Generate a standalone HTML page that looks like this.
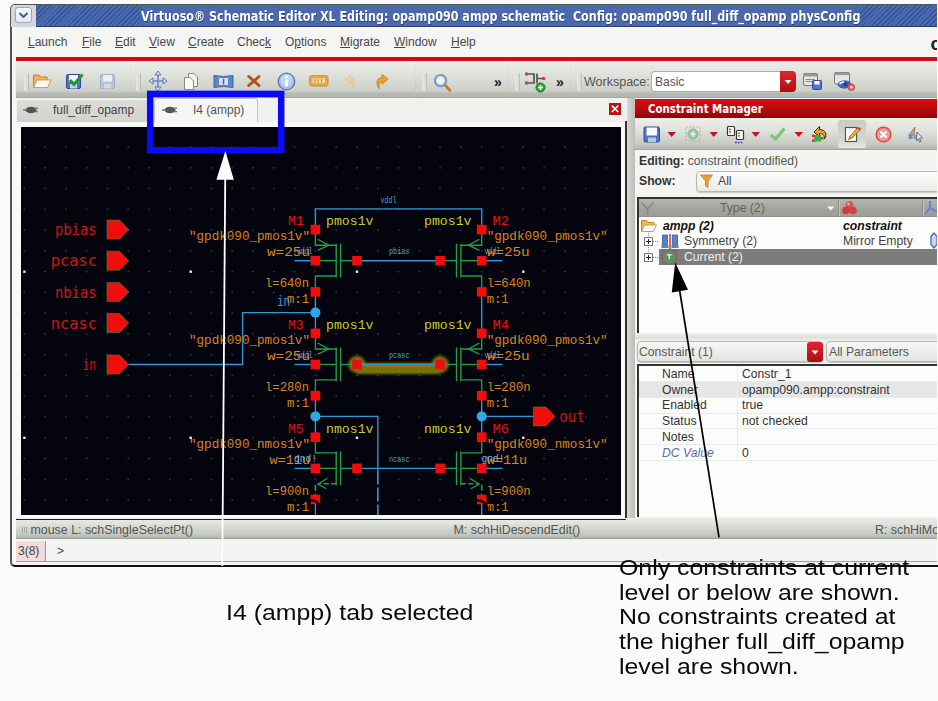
<!DOCTYPE html>
<html><head><meta charset="utf-8"><title>Virtuoso Schematic Editor XL</title>
<style>
html,body{margin:0;padding:0;}
body{width:938px;height:701px;overflow:hidden;background:#fbfbfb;font-family:"Liberation Sans",sans-serif;font-size:12px;color:#333;}
#root{position:relative;width:938px;height:701px;overflow:hidden;}
.abs{position:absolute;}
.t{position:absolute;white-space:nowrap;line-height:14px;}
.m{color:#484848;}
.st{color:#555;font-size:12.400px;}
.sch{font-family:"Liberation Mono","DejaVu Sans Mono",monospace;}
.pin{font-family:"DejaVu Sans Mono","Liberation Mono",monospace;}
.seg{position:absolute;top:63px;height:34px;border-radius:3px;background:linear-gradient(#ececea,#e2e4df 25%,#cdd0c9 82%,#b6bab2 90%,#b2b6ae);box-shadow:0 1px 1px #a8aca4;}
.ico{position:absolute;}
.row{position:absolute;left:638px;width:300px;height:16px;}
</style></head><body><div id="root">

<!-- window frame -->
<div class="abs" style="left:10px;top:4px;width:930px;height:563px;background:#f6f6f4;border:1px solid #555;border-bottom:2px solid #111;border-left:2px solid #555;border-radius:5px 0 0 5px;box-sizing:border-box;"></div>


<!-- title bar -->
<div class="abs" style="left:11px;top:5px;width:26px;height:22px;border-radius:4px 0 0 0;background:#d4d8de;"></div>
<div class="abs" style="left:36px;top:5px;width:902px;height:22px;background:#4b6ab0 repeating-linear-gradient(135deg,rgba(30,50,120,0.42) 0 1.2px,rgba(30,50,120,0) 1.2px 3.4px);border-bottom:1px solid #2c3c6c;box-sizing:border-box;"></div>
<div class="abs" style="left:138px;top:5px;width:724px;height:21px;background:linear-gradient(90deg,rgba(74,105,175,0),#4a69af 8px,#4a69af 716px,rgba(74,105,175,0));"></div>
<div class="abs" style="left:15px;top:7px;width:17px;height:16px;border:1px solid #a0a8b8;border-radius:3px;background:linear-gradient(#f8f9fb,#e6e9ee);box-sizing:border-box;"></div>
<svg class="abs" style="left:15px;top:7px" width="17" height="16"><polyline points="4.500,6 8.500,10 12.500,6" fill="none" stroke="#3a55a0" stroke-width="1.800"/></svg>
<div class="t" id="title" style="left:141px;top:9px;font-family:'DejaVu Sans Condensed','DejaVu Sans',sans-serif;font-weight:bold;font-size:13.400px;color:#fff;line-height:16px;white-space:pre;transform:scaleX(0.9265);transform-origin:0 0;text-shadow:0.500px 1px 0 rgba(20,30,80,0.55);">Virtuoso® Schematic Editor XL Editing: opamp090 ampp schematic  Config: opamp090 full_diff_opamp physConfig</div>

<!-- menu bar -->
<div class="abs" style="left:16px;top:27px;width:922px;height:30px;background:#f5f5f4;"></div>
<div class="t m" style="left:28px;top:35px;"><u>L</u>aunch</div>
<div class="t m" style="left:82px;top:35px;"><u>F</u>ile</div>
<div class="t m" style="left:115px;top:35px;"><u>E</u>dit</div>
<div class="t m" style="left:149px;top:35px;"><u>V</u>iew</div>
<div class="t m" style="left:188px;top:35px;"><u>C</u>reate</div>
<div class="t m" style="left:237px;top:35px;">Chec<u>k</u></div>
<div class="t m" style="left:285px;top:35px;">O<u>p</u>tions</div>
<div class="t m" style="left:340px;top:35px;"><u>M</u>igrate</div>
<div class="t m" style="left:394px;top:35px;"><u>W</u>indow</div>
<div class="t m" style="left:451px;top:35px;"><u>H</u>elp</div>
<div class="t" style="left:930.500px;top:33px;font-weight:bold;font-size:19px;color:#222;line-height:22px;">c</div>
<div class="abs" style="left:16px;top:56.500px;width:922px;height:4px;background:#d20c0c;"></div>

<!-- toolbar -->
<div class="abs" style="left:16px;top:60.500px;width:922px;height:37.500px;background:linear-gradient(#efefed,#e6e7e3 40%,#c4c8c0 88%,#a8aca4);"></div>
<div class="seg" style="left:16px;width:114px;"></div>
<div class="seg" style="left:131px;width:284px;"></div>
<div class="seg" style="left:416px;width:91px;"></div>
<div class="seg" style="left:508px;width:61.500px;"></div>
<div class="seg" style="left:570.500px;width:368px;border-radius:3px 0 0 3px;"></div>
<!-- grips -->
<div class="abs" style="left:24px;top:72.500px;width:4px;height:18.500px;background:linear-gradient(90deg,#e6e8e3,#d6d9d2);border-right:1px solid #bcc0b8;border-radius:1px;"></div>
<div class="abs" style="left:136px;top:72.500px;width:4px;height:18.500px;background:linear-gradient(90deg,#e6e8e3,#d6d9d2);border-right:1px solid #bcc0b8;border-radius:1px;"></div>
<div class="abs" style="left:422px;top:72.500px;width:4px;height:18.500px;background:linear-gradient(90deg,#e6e8e3,#d6d9d2);border-right:1px solid #bcc0b8;border-radius:1px;"></div>
<div class="abs" style="left:515px;top:72.500px;width:4px;height:18.500px;background:linear-gradient(90deg,#e6e8e3,#d6d9d2);border-right:1px solid #bcc0b8;border-radius:1px;"></div>
<div class="abs" style="left:577px;top:72.500px;width:4px;height:18.500px;background:linear-gradient(90deg,#e6e8e3,#d6d9d2);border-right:1px solid #bcc0b8;border-radius:1px;"></div>
<!-- open folder -->
<svg class="ico" style="left:32px;top:72px" width="20" height="18" viewBox="0 0 20 18"><path d="M1.5 15 V3 H7 L8.5 5 H15 V8" fill="#f3b25a" stroke="#c98428" stroke-width="1"/><path d="M1.5 15.5 L5 8 H19 L15.5 15.5 Z" fill="#fdfdfd" stroke="#d69a48" stroke-width="1"/></svg>
<!-- save check -->
<svg class="ico" style="left:65px;top:72px" width="20" height="18" viewBox="0 0 20 18"><rect x="1.5" y="2.5" width="14" height="14" rx="1.5" fill="#4f74c8" stroke="#2c4a98"/><rect x="4" y="3" width="9" height="7" fill="#f4f6fb"/><rect x="5" y="12" width="7" height="4.5" fill="#c9d3ea"/><path d="M5 8 L9 12.5 L17.5 2.5" fill="none" stroke="#1e9a2a" stroke-width="3"/></svg>
<!-- save disabled -->
<svg class="ico" style="left:99px;top:73px" width="18" height="17" viewBox="0 0 18 17"><rect x="1.5" y="1.5" width="14" height="14" rx="1.5" fill="#b9c3dc" stroke="#a3adc8"/><rect x="4" y="2" width="9" height="6.5" fill="#eceef4"/><rect x="5" y="11" width="7" height="4.5" fill="#d4dae8"/></svg>
<!-- move -->
<svg class="ico" style="left:148px;top:70px" width="20" height="22" viewBox="0 0 20 22"><path d="M10 2 V20 M1.5 11 H18.5" stroke="#6a88c0" stroke-width="1.6"/><path d="M10 1 L7 5 H13 Z M10 21 L7 17 H13 Z M1 11 L5 8 V14 Z M19 11 L15 8 V14 Z" fill="#dfe7f6" stroke="#4e6cae" stroke-width=".9"/></svg>
<!-- copy -->
<svg class="ico" style="left:183px;top:72px" width="16" height="19" viewBox="0 0 16 19"><path d="M5.5 1.5 H11 L14.5 5 V14.5 H5.5 Z" fill="#f4f4f2" stroke="#8a8a86"/><path d="M1.5 5.5 H7 L10.500 9 V17.500 H1.500 Z" fill="#fafaf8" stroke="#8a8a86"/></svg>
<!-- fit -->
<svg class="ico" style="left:213px;top:74px" width="21" height="15" viewBox="0 0 21 15"><path d="M1 1.500 Q10.500 3.500 20 1.500 V13.500 Q10.500 11.500 1 13.500 Z" fill="#5f86cc" stroke="#3c5ea8"/><rect x="6" y="4" width="9" height="7" rx="1" fill="#d8e2f4"/><rect x="9.700" y="4.500" width="1.600" height="6" fill="#4668b0"/></svg>
<!-- delete X -->
<svg class="ico" style="left:246px;top:74px" width="16" height="14" viewBox="0 0 16 14"><path d="M2.800 2.500 L13 11.500 M13 2.500 L2.800 11.500" stroke="#b4521a" stroke-width="3" stroke-linecap="round"/></svg>
<!-- info -->
<svg class="ico" style="left:277px;top:71.500px" width="19" height="19" viewBox="0 0 19 19"><circle cx="9.500" cy="9.500" r="8.300" fill="#a9bfe6" stroke="#5878bc" stroke-width="1.300"/><circle cx="9.500" cy="8" r="6" fill="#d3dff4" opacity=".7"/><rect x="8.400" y="8" width="2.400" height="6.500" fill="#fff"/><circle cx="9.600" cy="5" r="1.500" fill="#fff"/></svg>
<!-- label icon -->
<svg class="ico" style="left:309px;top:75px" width="20" height="12" viewBox="0 0 20 12"><rect x="0.700" y="0.700" width="18.300" height="10.300" rx="2" fill="#e8a850" stroke="#c88a3c"/><rect x="3.500" y="3.500" width="12.500" height="4.500" fill="#f6d9a4"/><path d="M6 4 V7.500 M9 4 V7.500 M12.500 4 V7.500" stroke="#d08a2c" stroke-width="1.200"/></svg>
<!-- undo disabled -->
<svg class="ico" style="left:343px;top:74px" width="15" height="16" viewBox="0 0 16 18"><path d="M2 6 L8 1.500 V4.500 C13 5 14 10 10 15.500 C11.500 11 10 8.500 8 8.500 V11 Z" fill="#ecd2a6" stroke="#e0bf8c" stroke-width=".8"/></svg>
<!-- redo -->
<svg class="ico" style="left:373px;top:73px" width="17" height="18" viewBox="0 0 18 19"><path d="M16 6.500 L9.500 1.500 V4.800 C3.500 5.500 2.500 11 7 17 C5.500 12 7 9 9.500 9 V11.800 Z" fill="#f0a030" stroke="#c87818" stroke-width=".9"/></svg>
<!-- magnifier -->
<svg class="ico" style="left:433px;top:72.500px" width="19.500" height="19.500" viewBox="0 0 22 22"><path d="M12 12 L19 19.500" stroke="#c8782a" stroke-width="3.200" stroke-linecap="round"/><circle cx="8.500" cy="8.500" r="6.300" fill="#dfe7f6" stroke="#8496be" stroke-width="2.400"/><path d="M8.500 5.500 V11.500 M5.500 8.500 H11.500" stroke="#fff" stroke-width="2"/></svg>
<div class="t" style="left:494px;top:75px;font-weight:bold;font-size:14px;color:#222;">»</div>
<!-- instance icon -->
<svg class="ico" style="left:524px;top:70px" width="24" height="24" viewBox="0 0 24 24"><path d="M3 4 H10 V13 H3 M13 3.500 V13.500 M13 8.500 H19" fill="none" stroke="#555" stroke-width="1.700"/><rect x="1" y="2.500" width="3" height="3" fill="#d83a3a"/><rect x="1" y="11.500" width="3" height="3" fill="#d83a3a"/><rect x="18" y="7" width="3" height="3" fill="#d83a3a"/><circle cx="16.500" cy="17.500" r="4.500" fill="#28a838" stroke="#157a22"/><path d="M16.500 15 V20 M14 17.500 H19" stroke="#fff" stroke-width="1.600"/></svg>
<div class="t" style="left:556px;top:75px;font-weight:bold;font-size:14px;color:#222;">»</div>
<div class="t" style="left:584px;top:75px;color:#555;font-size:12.500px;">Workspace:</div>
<div class="abs" style="left:651px;top:71px;width:130px;height:21px;background:#fff;border:1px solid #a9aca4;border-right:none;border-radius:4px 0 0 4px;box-sizing:border-box;"></div>
<div class="t" style="left:655px;top:75px;color:#555;">Basic</div>
<div class="abs" style="left:780px;top:71px;width:16px;height:21px;background:linear-gradient(#e0262c,#b00c12);border-radius:0 4px 4px 0;"></div>
<svg class="ico" style="left:780px;top:71px" width="16" height="21"><path d="M4.500 9 H11.500 L8 13 Z" fill="#fff"/></svg>
<!-- workspace icons -->
<svg class="ico" style="left:801.500px;top:71px" width="24" height="22" viewBox="0 0 24 22"><rect x="1.500" y="2.500" width="14" height="12" rx="1.500" fill="#e6e6e2" stroke="#777"/><rect x="1.500" y="2.500" width="14" height="3" fill="#999"/><path d="M3.500 8.500 H13 M3.500 10.500 H13" stroke="#888" stroke-width="1"/><rect x="10.500" y="9.500" width="9" height="9" rx="1" fill="#4f74c8" stroke="#2c4a98"/><rect x="12.500" y="10" width="5" height="3.500" fill="#fff"/></svg>
<svg class="ico" style="left:832.800px;top:71px" width="26" height="22" viewBox="0 0 26 22"><rect x="1.500" y="1.500" width="15" height="11.500" rx="1.500" fill="#e6e6e2" stroke="#777"/><rect x="1.500" y="1.500" width="15" height="2.600" fill="#999"/><ellipse cx="11.500" cy="13.500" rx="6.500" ry="3.600" fill="#4464b8" stroke="#3252a4" stroke-width="1"/><path d="M6.500 13 Q8.500 10.800 11 11" fill="none" stroke="#fff" stroke-width="1.600"/><circle cx="12.500" cy="13.500" r="2" fill="#22408c"/><circle cx="18.300" cy="16.200" r="3.300" fill="#e05a5a" stroke="#cc4040" stroke-width=".8"/><rect x="17" y="15.200" width="2.600" height="2.200" fill="#fbe4e4"/></svg>


<!-- tabs -->
<div class="abs" style="left:16px;top:98px;width:610px;height:25px;background:#f1f1ef;"></div>
<div class="abs" style="left:17px;top:100px;width:132px;height:23px;background:linear-gradient(#dcdcd9,#d2d2cf);border-radius:3px 3px 0 0;"></div>
<div class="abs" style="left:154px;top:98px;width:104px;height:25px;background:#f6f6f4;border:1px solid #c4c4c0;border-bottom:none;border-radius:4px 4px 0 0;box-sizing:border-box;"></div>
<div class="abs" style="left:16px;top:122px;width:610px;height:4px;background:#f8f8f6;"></div>
<div class="t" style="left:53px;top:103px;color:#444;">full_diff_opamp</div>
<div class="t" style="left:193px;top:103px;color:#555;">I4 (ampp)</div>
<svg class="abs" style="left:22.500px;top:104px" width="16" height="12"><ellipse cx="8" cy="6" rx="5.5" ry="3.3" fill="#555"/><rect x="0" y="5.2" width="4" height="1.6" fill="#777"/><rect x="12" y="3.5" width="3" height="1.3" fill="#777"/><rect x="12" y="7" width="3" height="1.3" fill="#777"/></svg>
<svg class="abs" style="left:162px;top:104px" width="16" height="12"><ellipse cx="8" cy="6" rx="5.5" ry="3.3" fill="#555"/><rect x="0" y="5.2" width="4" height="1.6" fill="#777"/><rect x="12" y="3.5" width="3" height="1.3" fill="#777"/><rect x="12" y="7" width="3" height="1.3" fill="#777"/></svg>
<div class="abs" style="left:608.500px;top:103.400px;width:12px;height:11.600px;background:#bc1016;"></div>
<svg class="abs" style="left:608.500px;top:103.400px" width="12" height="11.600"><path d="M2.800 2.600 L9.200 9 M9.200 2.600 L2.800 9" stroke="#fff" stroke-width="1.600"/></svg>

<!-- canvas -->
<div class="abs" style="left:16px;top:123px;width:610px;height:395px;background:#fafaf8;"></div>
<svg class="abs" style="left:20.5px;top:126.5px;background:#04040e" width="600.5" height="388" viewBox="0 0 600.5 388">
<defs><filter id="bl" x="-20%" y="-100%" width="140%" height="300%"><feGaussianBlur stdDeviation="1.6"/></filter></defs>
<rect x="2.6" y="19.3" width="1.5" height="1.5" fill="#323e4b"/>
<rect x="2.6" y="40.1" width="1.5" height="1.5" fill="#323e4b"/>
<rect x="2.6" y="60.8" width="1.5" height="1.5" fill="#323e4b"/>
<rect x="2.6" y="81.6" width="1.5" height="1.5" fill="#323e4b"/>
<rect x="2.6" y="102.4" width="1.5" height="1.5" fill="#323e4b"/>
<rect x="2.6" y="123.1" width="1.5" height="1.5" fill="#323e4b"/>
<rect x="2.2" y="143.5" width="2.4" height="2.4" fill="#e8e8e8"/>
<rect x="2.6" y="164.7" width="1.5" height="1.5" fill="#323e4b"/>
<rect x="2.6" y="185.4" width="1.5" height="1.5" fill="#323e4b"/>
<rect x="2.6" y="206.2" width="1.5" height="1.5" fill="#323e4b"/>
<rect x="2.6" y="226.9" width="1.5" height="1.5" fill="#323e4b"/>
<rect x="2.6" y="247.7" width="1.5" height="1.5" fill="#323e4b"/>
<rect x="2.6" y="268.5" width="1.5" height="1.5" fill="#323e4b"/>
<rect x="2.6" y="289.2" width="1.5" height="1.5" fill="#323e4b"/>
<rect x="2.2" y="309.6" width="2.4" height="2.4" fill="#e8e8e8"/>
<rect x="2.6" y="330.8" width="1.5" height="1.5" fill="#323e4b"/>
<rect x="2.6" y="351.5" width="1.5" height="1.5" fill="#323e4b"/>
<rect x="2.6" y="372.3" width="1.5" height="1.5" fill="#323e4b"/>
<rect x="23.3" y="19.3" width="1.5" height="1.5" fill="#323e4b"/>
<rect x="23.3" y="40.1" width="1.5" height="1.5" fill="#323e4b"/>
<rect x="23.3" y="60.8" width="1.5" height="1.5" fill="#323e4b"/>
<rect x="23.3" y="81.6" width="1.5" height="1.5" fill="#323e4b"/>
<rect x="23.3" y="102.4" width="1.5" height="1.5" fill="#323e4b"/>
<rect x="23.3" y="123.1" width="1.5" height="1.5" fill="#323e4b"/>
<rect x="23.3" y="143.9" width="1.5" height="1.5" fill="#323e4b"/>
<rect x="23.3" y="164.7" width="1.5" height="1.5" fill="#323e4b"/>
<rect x="23.3" y="185.4" width="1.5" height="1.5" fill="#323e4b"/>
<rect x="23.3" y="206.2" width="1.5" height="1.5" fill="#323e4b"/>
<rect x="23.3" y="226.9" width="1.5" height="1.5" fill="#323e4b"/>
<rect x="23.3" y="247.7" width="1.5" height="1.5" fill="#323e4b"/>
<rect x="23.3" y="268.5" width="1.5" height="1.5" fill="#323e4b"/>
<rect x="23.3" y="289.2" width="1.5" height="1.5" fill="#323e4b"/>
<rect x="23.3" y="310.0" width="1.5" height="1.5" fill="#323e4b"/>
<rect x="23.3" y="330.8" width="1.5" height="1.5" fill="#323e4b"/>
<rect x="23.3" y="351.5" width="1.5" height="1.5" fill="#323e4b"/>
<rect x="23.3" y="372.3" width="1.5" height="1.5" fill="#323e4b"/>
<rect x="44.1" y="19.3" width="1.5" height="1.5" fill="#323e4b"/>
<rect x="44.1" y="40.1" width="1.5" height="1.5" fill="#323e4b"/>
<rect x="44.1" y="60.8" width="1.5" height="1.5" fill="#323e4b"/>
<rect x="44.1" y="81.6" width="1.5" height="1.5" fill="#323e4b"/>
<rect x="44.1" y="102.4" width="1.5" height="1.5" fill="#323e4b"/>
<rect x="44.1" y="123.1" width="1.5" height="1.5" fill="#323e4b"/>
<rect x="44.1" y="143.9" width="1.5" height="1.5" fill="#323e4b"/>
<rect x="44.1" y="164.7" width="1.5" height="1.5" fill="#323e4b"/>
<rect x="44.1" y="185.4" width="1.5" height="1.5" fill="#323e4b"/>
<rect x="44.1" y="206.2" width="1.5" height="1.5" fill="#323e4b"/>
<rect x="44.1" y="226.9" width="1.5" height="1.5" fill="#323e4b"/>
<rect x="44.1" y="247.7" width="1.5" height="1.5" fill="#323e4b"/>
<rect x="44.1" y="268.5" width="1.5" height="1.5" fill="#323e4b"/>
<rect x="44.1" y="289.2" width="1.5" height="1.5" fill="#323e4b"/>
<rect x="44.1" y="310.0" width="1.5" height="1.5" fill="#323e4b"/>
<rect x="44.1" y="330.8" width="1.5" height="1.5" fill="#323e4b"/>
<rect x="44.1" y="351.5" width="1.5" height="1.5" fill="#323e4b"/>
<rect x="44.1" y="372.3" width="1.5" height="1.5" fill="#323e4b"/>
<rect x="64.9" y="19.3" width="1.5" height="1.5" fill="#323e4b"/>
<rect x="64.9" y="40.1" width="1.5" height="1.5" fill="#323e4b"/>
<rect x="64.9" y="60.8" width="1.5" height="1.5" fill="#323e4b"/>
<rect x="64.9" y="81.6" width="1.5" height="1.5" fill="#323e4b"/>
<rect x="64.9" y="102.4" width="1.5" height="1.5" fill="#323e4b"/>
<rect x="64.9" y="123.1" width="1.5" height="1.5" fill="#323e4b"/>
<rect x="64.9" y="143.9" width="1.5" height="1.5" fill="#323e4b"/>
<rect x="64.9" y="164.7" width="1.5" height="1.5" fill="#323e4b"/>
<rect x="64.9" y="185.4" width="1.5" height="1.5" fill="#323e4b"/>
<rect x="64.9" y="206.2" width="1.5" height="1.5" fill="#323e4b"/>
<rect x="64.9" y="226.9" width="1.5" height="1.5" fill="#323e4b"/>
<rect x="64.9" y="247.7" width="1.5" height="1.5" fill="#323e4b"/>
<rect x="64.9" y="268.5" width="1.5" height="1.5" fill="#323e4b"/>
<rect x="64.9" y="289.2" width="1.5" height="1.5" fill="#323e4b"/>
<rect x="64.9" y="310.0" width="1.5" height="1.5" fill="#323e4b"/>
<rect x="64.9" y="330.8" width="1.5" height="1.5" fill="#323e4b"/>
<rect x="64.9" y="351.5" width="1.5" height="1.5" fill="#323e4b"/>
<rect x="64.9" y="372.3" width="1.5" height="1.5" fill="#323e4b"/>
<rect x="85.7" y="19.3" width="1.5" height="1.5" fill="#323e4b"/>
<rect x="85.7" y="40.1" width="1.5" height="1.5" fill="#323e4b"/>
<rect x="85.7" y="60.8" width="1.5" height="1.5" fill="#323e4b"/>
<rect x="85.7" y="81.6" width="1.5" height="1.5" fill="#323e4b"/>
<rect x="85.7" y="102.4" width="1.5" height="1.5" fill="#323e4b"/>
<rect x="85.7" y="123.1" width="1.5" height="1.5" fill="#323e4b"/>
<rect x="85.7" y="143.9" width="1.5" height="1.5" fill="#323e4b"/>
<rect x="85.7" y="164.7" width="1.5" height="1.5" fill="#323e4b"/>
<rect x="85.7" y="185.4" width="1.5" height="1.5" fill="#323e4b"/>
<rect x="85.7" y="206.2" width="1.5" height="1.5" fill="#323e4b"/>
<rect x="85.7" y="226.9" width="1.5" height="1.5" fill="#323e4b"/>
<rect x="85.7" y="247.7" width="1.5" height="1.5" fill="#323e4b"/>
<rect x="85.7" y="268.5" width="1.5" height="1.5" fill="#323e4b"/>
<rect x="85.7" y="289.2" width="1.5" height="1.5" fill="#323e4b"/>
<rect x="85.7" y="310.0" width="1.5" height="1.5" fill="#323e4b"/>
<rect x="85.7" y="330.8" width="1.5" height="1.5" fill="#323e4b"/>
<rect x="85.7" y="351.5" width="1.5" height="1.5" fill="#323e4b"/>
<rect x="85.7" y="372.3" width="1.5" height="1.5" fill="#323e4b"/>
<rect x="106.5" y="19.3" width="1.5" height="1.5" fill="#323e4b"/>
<rect x="106.5" y="40.1" width="1.5" height="1.5" fill="#323e4b"/>
<rect x="106.5" y="60.8" width="1.5" height="1.5" fill="#323e4b"/>
<rect x="106.5" y="81.6" width="1.5" height="1.5" fill="#323e4b"/>
<rect x="106.5" y="102.4" width="1.5" height="1.5" fill="#323e4b"/>
<rect x="106.5" y="123.1" width="1.5" height="1.5" fill="#323e4b"/>
<rect x="106.5" y="143.9" width="1.5" height="1.5" fill="#323e4b"/>
<rect x="106.5" y="164.7" width="1.5" height="1.5" fill="#323e4b"/>
<rect x="106.5" y="185.4" width="1.5" height="1.5" fill="#323e4b"/>
<rect x="106.5" y="206.2" width="1.5" height="1.5" fill="#323e4b"/>
<rect x="106.5" y="226.9" width="1.5" height="1.5" fill="#323e4b"/>
<rect x="106.5" y="247.7" width="1.5" height="1.5" fill="#323e4b"/>
<rect x="106.5" y="268.5" width="1.5" height="1.5" fill="#323e4b"/>
<rect x="106.5" y="289.2" width="1.5" height="1.5" fill="#323e4b"/>
<rect x="106.5" y="310.0" width="1.5" height="1.5" fill="#323e4b"/>
<rect x="106.5" y="330.8" width="1.5" height="1.5" fill="#323e4b"/>
<rect x="106.5" y="351.5" width="1.5" height="1.5" fill="#323e4b"/>
<rect x="106.5" y="372.3" width="1.5" height="1.5" fill="#323e4b"/>
<rect x="127.3" y="19.3" width="1.5" height="1.5" fill="#323e4b"/>
<rect x="127.3" y="40.1" width="1.5" height="1.5" fill="#323e4b"/>
<rect x="127.3" y="60.8" width="1.5" height="1.5" fill="#323e4b"/>
<rect x="127.3" y="81.6" width="1.5" height="1.5" fill="#323e4b"/>
<rect x="127.3" y="102.4" width="1.5" height="1.5" fill="#323e4b"/>
<rect x="127.3" y="123.1" width="1.5" height="1.5" fill="#323e4b"/>
<rect x="127.3" y="143.9" width="1.5" height="1.5" fill="#323e4b"/>
<rect x="127.3" y="164.7" width="1.5" height="1.5" fill="#323e4b"/>
<rect x="127.3" y="185.4" width="1.5" height="1.5" fill="#323e4b"/>
<rect x="127.3" y="206.2" width="1.5" height="1.5" fill="#323e4b"/>
<rect x="127.3" y="226.9" width="1.5" height="1.5" fill="#323e4b"/>
<rect x="127.3" y="247.7" width="1.5" height="1.5" fill="#323e4b"/>
<rect x="127.3" y="268.5" width="1.5" height="1.5" fill="#323e4b"/>
<rect x="127.3" y="289.2" width="1.5" height="1.5" fill="#323e4b"/>
<rect x="127.3" y="310.0" width="1.5" height="1.5" fill="#323e4b"/>
<rect x="127.3" y="330.8" width="1.5" height="1.5" fill="#323e4b"/>
<rect x="127.3" y="351.5" width="1.5" height="1.5" fill="#323e4b"/>
<rect x="127.3" y="372.3" width="1.5" height="1.5" fill="#323e4b"/>
<rect x="148.1" y="19.3" width="1.5" height="1.5" fill="#323e4b"/>
<rect x="148.1" y="40.1" width="1.5" height="1.5" fill="#323e4b"/>
<rect x="148.1" y="60.8" width="1.5" height="1.5" fill="#323e4b"/>
<rect x="148.1" y="81.6" width="1.5" height="1.5" fill="#323e4b"/>
<rect x="148.1" y="102.4" width="1.5" height="1.5" fill="#323e4b"/>
<rect x="148.1" y="123.1" width="1.5" height="1.5" fill="#323e4b"/>
<rect x="148.1" y="143.9" width="1.5" height="1.5" fill="#323e4b"/>
<rect x="148.1" y="164.7" width="1.5" height="1.5" fill="#323e4b"/>
<rect x="148.1" y="185.4" width="1.5" height="1.5" fill="#323e4b"/>
<rect x="148.1" y="206.2" width="1.5" height="1.5" fill="#323e4b"/>
<rect x="148.1" y="226.9" width="1.5" height="1.5" fill="#323e4b"/>
<rect x="148.1" y="247.7" width="1.5" height="1.5" fill="#323e4b"/>
<rect x="148.1" y="268.5" width="1.5" height="1.5" fill="#323e4b"/>
<rect x="148.1" y="289.2" width="1.5" height="1.5" fill="#323e4b"/>
<rect x="148.1" y="310.0" width="1.5" height="1.5" fill="#323e4b"/>
<rect x="148.1" y="330.8" width="1.5" height="1.5" fill="#323e4b"/>
<rect x="148.1" y="351.5" width="1.5" height="1.5" fill="#323e4b"/>
<rect x="148.1" y="372.3" width="1.5" height="1.5" fill="#323e4b"/>
<rect x="168.9" y="19.3" width="1.5" height="1.5" fill="#323e4b"/>
<rect x="168.9" y="40.1" width="1.5" height="1.5" fill="#323e4b"/>
<rect x="168.9" y="60.8" width="1.5" height="1.5" fill="#323e4b"/>
<rect x="168.9" y="81.6" width="1.5" height="1.5" fill="#323e4b"/>
<rect x="168.9" y="102.4" width="1.5" height="1.5" fill="#323e4b"/>
<rect x="168.9" y="123.1" width="1.5" height="1.5" fill="#323e4b"/>
<rect x="168.5" y="143.5" width="2.4" height="2.4" fill="#e8e8e8"/>
<rect x="168.9" y="164.7" width="1.5" height="1.5" fill="#323e4b"/>
<rect x="168.9" y="185.4" width="1.5" height="1.5" fill="#323e4b"/>
<rect x="168.9" y="206.2" width="1.5" height="1.5" fill="#323e4b"/>
<rect x="168.9" y="226.9" width="1.5" height="1.5" fill="#323e4b"/>
<rect x="168.9" y="247.7" width="1.5" height="1.5" fill="#323e4b"/>
<rect x="168.9" y="268.5" width="1.5" height="1.5" fill="#323e4b"/>
<rect x="168.9" y="289.2" width="1.5" height="1.5" fill="#323e4b"/>
<rect x="168.5" y="309.6" width="2.4" height="2.4" fill="#e8e8e8"/>
<rect x="168.9" y="330.8" width="1.5" height="1.5" fill="#323e4b"/>
<rect x="168.9" y="351.5" width="1.5" height="1.5" fill="#323e4b"/>
<rect x="168.9" y="372.3" width="1.5" height="1.5" fill="#323e4b"/>
<rect x="189.7" y="19.3" width="1.5" height="1.5" fill="#323e4b"/>
<rect x="189.7" y="40.1" width="1.5" height="1.5" fill="#323e4b"/>
<rect x="189.7" y="60.8" width="1.5" height="1.5" fill="#323e4b"/>
<rect x="189.7" y="81.6" width="1.5" height="1.5" fill="#323e4b"/>
<rect x="189.7" y="102.4" width="1.5" height="1.5" fill="#323e4b"/>
<rect x="189.7" y="123.1" width="1.5" height="1.5" fill="#323e4b"/>
<rect x="189.7" y="143.9" width="1.5" height="1.5" fill="#323e4b"/>
<rect x="189.7" y="164.7" width="1.5" height="1.5" fill="#323e4b"/>
<rect x="189.7" y="185.4" width="1.5" height="1.5" fill="#323e4b"/>
<rect x="189.7" y="206.2" width="1.5" height="1.5" fill="#323e4b"/>
<rect x="189.7" y="226.9" width="1.5" height="1.5" fill="#323e4b"/>
<rect x="189.7" y="247.7" width="1.5" height="1.5" fill="#323e4b"/>
<rect x="189.7" y="268.5" width="1.5" height="1.5" fill="#323e4b"/>
<rect x="189.7" y="289.2" width="1.5" height="1.5" fill="#323e4b"/>
<rect x="189.7" y="310.0" width="1.5" height="1.5" fill="#323e4b"/>
<rect x="189.7" y="330.8" width="1.5" height="1.5" fill="#323e4b"/>
<rect x="189.7" y="351.5" width="1.5" height="1.5" fill="#323e4b"/>
<rect x="189.7" y="372.3" width="1.5" height="1.5" fill="#323e4b"/>
<rect x="210.4" y="19.3" width="1.5" height="1.5" fill="#323e4b"/>
<rect x="210.4" y="40.1" width="1.5" height="1.5" fill="#323e4b"/>
<rect x="210.4" y="60.8" width="1.5" height="1.5" fill="#323e4b"/>
<rect x="210.4" y="81.6" width="1.5" height="1.5" fill="#323e4b"/>
<rect x="210.4" y="102.4" width="1.5" height="1.5" fill="#323e4b"/>
<rect x="210.4" y="123.1" width="1.5" height="1.5" fill="#323e4b"/>
<rect x="210.4" y="143.9" width="1.5" height="1.5" fill="#323e4b"/>
<rect x="210.4" y="164.7" width="1.5" height="1.5" fill="#323e4b"/>
<rect x="210.4" y="185.4" width="1.5" height="1.5" fill="#323e4b"/>
<rect x="210.4" y="206.2" width="1.5" height="1.5" fill="#323e4b"/>
<rect x="210.4" y="226.9" width="1.5" height="1.5" fill="#323e4b"/>
<rect x="210.4" y="247.7" width="1.5" height="1.5" fill="#323e4b"/>
<rect x="210.4" y="268.5" width="1.5" height="1.5" fill="#323e4b"/>
<rect x="210.4" y="289.2" width="1.5" height="1.5" fill="#323e4b"/>
<rect x="210.4" y="310.0" width="1.5" height="1.5" fill="#323e4b"/>
<rect x="210.4" y="330.8" width="1.5" height="1.5" fill="#323e4b"/>
<rect x="210.4" y="351.5" width="1.5" height="1.5" fill="#323e4b"/>
<rect x="210.4" y="372.3" width="1.5" height="1.5" fill="#323e4b"/>
<rect x="231.2" y="19.3" width="1.5" height="1.5" fill="#323e4b"/>
<rect x="231.2" y="40.1" width="1.5" height="1.5" fill="#323e4b"/>
<rect x="231.2" y="60.8" width="1.5" height="1.5" fill="#323e4b"/>
<rect x="231.2" y="81.6" width="1.5" height="1.5" fill="#323e4b"/>
<rect x="231.2" y="102.4" width="1.5" height="1.5" fill="#323e4b"/>
<rect x="231.2" y="123.1" width="1.5" height="1.5" fill="#323e4b"/>
<rect x="231.2" y="143.9" width="1.5" height="1.5" fill="#323e4b"/>
<rect x="231.2" y="164.7" width="1.5" height="1.5" fill="#323e4b"/>
<rect x="231.2" y="185.4" width="1.5" height="1.5" fill="#323e4b"/>
<rect x="231.2" y="206.2" width="1.5" height="1.5" fill="#323e4b"/>
<rect x="231.2" y="226.9" width="1.5" height="1.5" fill="#323e4b"/>
<rect x="231.2" y="247.7" width="1.5" height="1.5" fill="#323e4b"/>
<rect x="231.2" y="268.5" width="1.5" height="1.5" fill="#323e4b"/>
<rect x="231.2" y="289.2" width="1.5" height="1.5" fill="#323e4b"/>
<rect x="231.2" y="310.0" width="1.5" height="1.5" fill="#323e4b"/>
<rect x="231.2" y="330.8" width="1.5" height="1.5" fill="#323e4b"/>
<rect x="231.2" y="351.5" width="1.5" height="1.5" fill="#323e4b"/>
<rect x="231.2" y="372.3" width="1.5" height="1.5" fill="#323e4b"/>
<rect x="252.0" y="19.3" width="1.5" height="1.5" fill="#323e4b"/>
<rect x="252.0" y="40.1" width="1.5" height="1.5" fill="#323e4b"/>
<rect x="252.0" y="60.8" width="1.5" height="1.5" fill="#323e4b"/>
<rect x="252.0" y="81.6" width="1.5" height="1.5" fill="#323e4b"/>
<rect x="252.0" y="102.4" width="1.5" height="1.5" fill="#323e4b"/>
<rect x="252.0" y="123.1" width="1.5" height="1.5" fill="#323e4b"/>
<rect x="252.0" y="143.9" width="1.5" height="1.5" fill="#323e4b"/>
<rect x="252.0" y="164.7" width="1.5" height="1.5" fill="#323e4b"/>
<rect x="252.0" y="185.4" width="1.5" height="1.5" fill="#323e4b"/>
<rect x="252.0" y="206.2" width="1.5" height="1.5" fill="#323e4b"/>
<rect x="252.0" y="226.9" width="1.5" height="1.5" fill="#323e4b"/>
<rect x="252.0" y="247.7" width="1.5" height="1.5" fill="#323e4b"/>
<rect x="252.0" y="268.5" width="1.5" height="1.5" fill="#323e4b"/>
<rect x="252.0" y="289.2" width="1.5" height="1.5" fill="#323e4b"/>
<rect x="252.0" y="310.0" width="1.5" height="1.5" fill="#323e4b"/>
<rect x="252.0" y="330.8" width="1.5" height="1.5" fill="#323e4b"/>
<rect x="252.0" y="351.5" width="1.5" height="1.5" fill="#323e4b"/>
<rect x="252.0" y="372.3" width="1.5" height="1.5" fill="#323e4b"/>
<rect x="272.8" y="19.3" width="1.5" height="1.5" fill="#323e4b"/>
<rect x="272.8" y="40.1" width="1.5" height="1.5" fill="#323e4b"/>
<rect x="272.8" y="60.8" width="1.5" height="1.5" fill="#323e4b"/>
<rect x="272.8" y="81.6" width="1.5" height="1.5" fill="#323e4b"/>
<rect x="272.8" y="102.4" width="1.5" height="1.5" fill="#323e4b"/>
<rect x="272.8" y="123.1" width="1.5" height="1.5" fill="#323e4b"/>
<rect x="272.8" y="143.9" width="1.5" height="1.5" fill="#323e4b"/>
<rect x="272.8" y="164.7" width="1.5" height="1.5" fill="#323e4b"/>
<rect x="272.8" y="185.4" width="1.5" height="1.5" fill="#323e4b"/>
<rect x="272.8" y="206.2" width="1.5" height="1.5" fill="#323e4b"/>
<rect x="272.8" y="226.9" width="1.5" height="1.5" fill="#323e4b"/>
<rect x="272.8" y="247.7" width="1.5" height="1.5" fill="#323e4b"/>
<rect x="272.8" y="268.5" width="1.5" height="1.5" fill="#323e4b"/>
<rect x="272.8" y="289.2" width="1.5" height="1.5" fill="#323e4b"/>
<rect x="272.8" y="310.0" width="1.5" height="1.5" fill="#323e4b"/>
<rect x="272.8" y="330.8" width="1.5" height="1.5" fill="#323e4b"/>
<rect x="272.8" y="351.5" width="1.5" height="1.5" fill="#323e4b"/>
<rect x="272.8" y="372.3" width="1.5" height="1.5" fill="#323e4b"/>
<rect x="293.6" y="19.3" width="1.5" height="1.5" fill="#323e4b"/>
<rect x="293.6" y="40.1" width="1.5" height="1.5" fill="#323e4b"/>
<rect x="293.6" y="60.8" width="1.5" height="1.5" fill="#323e4b"/>
<rect x="293.6" y="81.6" width="1.5" height="1.5" fill="#323e4b"/>
<rect x="293.6" y="102.4" width="1.5" height="1.5" fill="#323e4b"/>
<rect x="293.6" y="123.1" width="1.5" height="1.5" fill="#323e4b"/>
<rect x="293.6" y="143.9" width="1.5" height="1.5" fill="#323e4b"/>
<rect x="293.6" y="164.7" width="1.5" height="1.5" fill="#323e4b"/>
<rect x="293.6" y="185.4" width="1.5" height="1.5" fill="#323e4b"/>
<rect x="293.6" y="206.2" width="1.5" height="1.5" fill="#323e4b"/>
<rect x="293.6" y="226.9" width="1.5" height="1.5" fill="#323e4b"/>
<rect x="293.6" y="247.7" width="1.5" height="1.5" fill="#323e4b"/>
<rect x="293.6" y="268.5" width="1.5" height="1.5" fill="#323e4b"/>
<rect x="293.6" y="289.2" width="1.5" height="1.5" fill="#323e4b"/>
<rect x="293.6" y="310.0" width="1.5" height="1.5" fill="#323e4b"/>
<rect x="293.6" y="330.8" width="1.5" height="1.5" fill="#323e4b"/>
<rect x="293.6" y="351.5" width="1.5" height="1.5" fill="#323e4b"/>
<rect x="293.6" y="372.3" width="1.5" height="1.5" fill="#323e4b"/>
<rect x="314.4" y="19.3" width="1.5" height="1.5" fill="#323e4b"/>
<rect x="314.4" y="40.1" width="1.5" height="1.5" fill="#323e4b"/>
<rect x="314.4" y="60.8" width="1.5" height="1.5" fill="#323e4b"/>
<rect x="314.4" y="81.6" width="1.5" height="1.5" fill="#323e4b"/>
<rect x="314.4" y="102.4" width="1.5" height="1.5" fill="#323e4b"/>
<rect x="314.4" y="123.1" width="1.5" height="1.5" fill="#323e4b"/>
<rect x="314.4" y="143.9" width="1.5" height="1.5" fill="#323e4b"/>
<rect x="314.4" y="164.7" width="1.5" height="1.5" fill="#323e4b"/>
<rect x="314.4" y="185.4" width="1.5" height="1.5" fill="#323e4b"/>
<rect x="314.4" y="206.2" width="1.5" height="1.5" fill="#323e4b"/>
<rect x="314.4" y="226.9" width="1.5" height="1.5" fill="#323e4b"/>
<rect x="314.4" y="247.7" width="1.5" height="1.5" fill="#323e4b"/>
<rect x="314.4" y="268.5" width="1.5" height="1.5" fill="#323e4b"/>
<rect x="314.4" y="289.2" width="1.5" height="1.5" fill="#323e4b"/>
<rect x="314.4" y="310.0" width="1.5" height="1.5" fill="#323e4b"/>
<rect x="314.4" y="330.8" width="1.5" height="1.5" fill="#323e4b"/>
<rect x="314.4" y="351.5" width="1.5" height="1.5" fill="#323e4b"/>
<rect x="314.4" y="372.3" width="1.5" height="1.5" fill="#323e4b"/>
<rect x="335.2" y="19.3" width="1.5" height="1.5" fill="#323e4b"/>
<rect x="335.2" y="40.1" width="1.5" height="1.5" fill="#323e4b"/>
<rect x="335.2" y="60.8" width="1.5" height="1.5" fill="#323e4b"/>
<rect x="335.2" y="81.6" width="1.5" height="1.5" fill="#323e4b"/>
<rect x="335.2" y="102.4" width="1.5" height="1.5" fill="#323e4b"/>
<rect x="335.2" y="123.1" width="1.5" height="1.5" fill="#323e4b"/>
<rect x="334.8" y="143.5" width="2.4" height="2.4" fill="#e8e8e8"/>
<rect x="335.2" y="164.7" width="1.5" height="1.5" fill="#323e4b"/>
<rect x="335.2" y="185.4" width="1.5" height="1.5" fill="#323e4b"/>
<rect x="335.2" y="206.2" width="1.5" height="1.5" fill="#323e4b"/>
<rect x="335.2" y="226.9" width="1.5" height="1.5" fill="#323e4b"/>
<rect x="335.2" y="247.7" width="1.5" height="1.5" fill="#323e4b"/>
<rect x="335.2" y="268.5" width="1.5" height="1.5" fill="#323e4b"/>
<rect x="335.2" y="289.2" width="1.5" height="1.5" fill="#323e4b"/>
<rect x="334.8" y="309.6" width="2.4" height="2.4" fill="#e8e8e8"/>
<rect x="335.2" y="330.8" width="1.5" height="1.5" fill="#323e4b"/>
<rect x="335.2" y="351.5" width="1.5" height="1.5" fill="#323e4b"/>
<rect x="335.2" y="372.3" width="1.5" height="1.5" fill="#323e4b"/>
<rect x="356.0" y="19.3" width="1.5" height="1.5" fill="#323e4b"/>
<rect x="356.0" y="40.1" width="1.5" height="1.5" fill="#323e4b"/>
<rect x="356.0" y="60.8" width="1.5" height="1.5" fill="#323e4b"/>
<rect x="356.0" y="81.6" width="1.5" height="1.5" fill="#323e4b"/>
<rect x="356.0" y="102.4" width="1.5" height="1.5" fill="#323e4b"/>
<rect x="356.0" y="123.1" width="1.5" height="1.5" fill="#323e4b"/>
<rect x="356.0" y="143.9" width="1.5" height="1.5" fill="#323e4b"/>
<rect x="356.0" y="164.7" width="1.5" height="1.5" fill="#323e4b"/>
<rect x="356.0" y="185.4" width="1.5" height="1.5" fill="#323e4b"/>
<rect x="356.0" y="206.2" width="1.5" height="1.5" fill="#323e4b"/>
<rect x="356.0" y="226.9" width="1.5" height="1.5" fill="#323e4b"/>
<rect x="356.0" y="247.7" width="1.5" height="1.5" fill="#323e4b"/>
<rect x="356.0" y="268.5" width="1.5" height="1.5" fill="#323e4b"/>
<rect x="356.0" y="289.2" width="1.5" height="1.5" fill="#323e4b"/>
<rect x="356.0" y="310.0" width="1.5" height="1.5" fill="#323e4b"/>
<rect x="356.0" y="330.8" width="1.5" height="1.5" fill="#323e4b"/>
<rect x="356.0" y="351.5" width="1.5" height="1.5" fill="#323e4b"/>
<rect x="356.0" y="372.3" width="1.5" height="1.5" fill="#323e4b"/>
<rect x="376.8" y="19.3" width="1.5" height="1.5" fill="#323e4b"/>
<rect x="376.8" y="40.1" width="1.5" height="1.5" fill="#323e4b"/>
<rect x="376.8" y="60.8" width="1.5" height="1.5" fill="#323e4b"/>
<rect x="376.8" y="81.6" width="1.5" height="1.5" fill="#323e4b"/>
<rect x="376.8" y="102.4" width="1.5" height="1.5" fill="#323e4b"/>
<rect x="376.8" y="123.1" width="1.5" height="1.5" fill="#323e4b"/>
<rect x="376.8" y="143.9" width="1.5" height="1.5" fill="#323e4b"/>
<rect x="376.8" y="164.7" width="1.5" height="1.5" fill="#323e4b"/>
<rect x="376.8" y="185.4" width="1.5" height="1.5" fill="#323e4b"/>
<rect x="376.8" y="206.2" width="1.5" height="1.5" fill="#323e4b"/>
<rect x="376.8" y="226.9" width="1.5" height="1.5" fill="#323e4b"/>
<rect x="376.8" y="247.7" width="1.5" height="1.5" fill="#323e4b"/>
<rect x="376.8" y="268.5" width="1.5" height="1.5" fill="#323e4b"/>
<rect x="376.8" y="289.2" width="1.5" height="1.5" fill="#323e4b"/>
<rect x="376.8" y="310.0" width="1.5" height="1.5" fill="#323e4b"/>
<rect x="376.8" y="330.8" width="1.5" height="1.5" fill="#323e4b"/>
<rect x="376.8" y="351.5" width="1.5" height="1.5" fill="#323e4b"/>
<rect x="376.8" y="372.3" width="1.5" height="1.5" fill="#323e4b"/>
<rect x="397.6" y="19.3" width="1.5" height="1.5" fill="#323e4b"/>
<rect x="397.6" y="40.1" width="1.5" height="1.5" fill="#323e4b"/>
<rect x="397.6" y="60.8" width="1.5" height="1.5" fill="#323e4b"/>
<rect x="397.6" y="81.6" width="1.5" height="1.5" fill="#323e4b"/>
<rect x="397.6" y="102.4" width="1.5" height="1.5" fill="#323e4b"/>
<rect x="397.6" y="123.1" width="1.5" height="1.5" fill="#323e4b"/>
<rect x="397.6" y="143.9" width="1.5" height="1.5" fill="#323e4b"/>
<rect x="397.6" y="164.7" width="1.5" height="1.5" fill="#323e4b"/>
<rect x="397.6" y="185.4" width="1.5" height="1.5" fill="#323e4b"/>
<rect x="397.6" y="206.2" width="1.5" height="1.5" fill="#323e4b"/>
<rect x="397.6" y="226.9" width="1.5" height="1.5" fill="#323e4b"/>
<rect x="397.6" y="247.7" width="1.5" height="1.5" fill="#323e4b"/>
<rect x="397.6" y="268.5" width="1.5" height="1.5" fill="#323e4b"/>
<rect x="397.6" y="289.2" width="1.5" height="1.5" fill="#323e4b"/>
<rect x="397.6" y="310.0" width="1.5" height="1.5" fill="#323e4b"/>
<rect x="397.6" y="330.8" width="1.5" height="1.5" fill="#323e4b"/>
<rect x="397.6" y="351.5" width="1.5" height="1.5" fill="#323e4b"/>
<rect x="397.6" y="372.3" width="1.5" height="1.5" fill="#323e4b"/>
<rect x="418.3" y="19.3" width="1.5" height="1.5" fill="#323e4b"/>
<rect x="418.3" y="40.1" width="1.5" height="1.5" fill="#323e4b"/>
<rect x="418.3" y="60.8" width="1.5" height="1.5" fill="#323e4b"/>
<rect x="418.3" y="81.6" width="1.5" height="1.5" fill="#323e4b"/>
<rect x="418.3" y="102.4" width="1.5" height="1.5" fill="#323e4b"/>
<rect x="418.3" y="123.1" width="1.5" height="1.5" fill="#323e4b"/>
<rect x="418.3" y="143.9" width="1.5" height="1.5" fill="#323e4b"/>
<rect x="418.3" y="164.7" width="1.5" height="1.5" fill="#323e4b"/>
<rect x="418.3" y="185.4" width="1.5" height="1.5" fill="#323e4b"/>
<rect x="418.3" y="206.2" width="1.5" height="1.5" fill="#323e4b"/>
<rect x="418.3" y="226.9" width="1.5" height="1.5" fill="#323e4b"/>
<rect x="418.3" y="247.7" width="1.5" height="1.5" fill="#323e4b"/>
<rect x="418.3" y="268.5" width="1.5" height="1.5" fill="#323e4b"/>
<rect x="418.3" y="289.2" width="1.5" height="1.5" fill="#323e4b"/>
<rect x="418.3" y="310.0" width="1.5" height="1.5" fill="#323e4b"/>
<rect x="418.3" y="330.8" width="1.5" height="1.5" fill="#323e4b"/>
<rect x="418.3" y="351.5" width="1.5" height="1.5" fill="#323e4b"/>
<rect x="418.3" y="372.3" width="1.5" height="1.5" fill="#323e4b"/>
<rect x="439.1" y="19.3" width="1.5" height="1.5" fill="#323e4b"/>
<rect x="439.1" y="40.1" width="1.5" height="1.5" fill="#323e4b"/>
<rect x="439.1" y="60.8" width="1.5" height="1.5" fill="#323e4b"/>
<rect x="439.1" y="81.6" width="1.5" height="1.5" fill="#323e4b"/>
<rect x="439.1" y="102.4" width="1.5" height="1.5" fill="#323e4b"/>
<rect x="439.1" y="123.1" width="1.5" height="1.5" fill="#323e4b"/>
<rect x="439.1" y="143.9" width="1.5" height="1.5" fill="#323e4b"/>
<rect x="439.1" y="164.7" width="1.5" height="1.5" fill="#323e4b"/>
<rect x="439.1" y="185.4" width="1.5" height="1.5" fill="#323e4b"/>
<rect x="439.1" y="206.2" width="1.5" height="1.5" fill="#323e4b"/>
<rect x="439.1" y="226.9" width="1.5" height="1.5" fill="#323e4b"/>
<rect x="439.1" y="247.7" width="1.5" height="1.5" fill="#323e4b"/>
<rect x="439.1" y="268.5" width="1.5" height="1.5" fill="#323e4b"/>
<rect x="439.1" y="289.2" width="1.5" height="1.5" fill="#323e4b"/>
<rect x="439.1" y="310.0" width="1.5" height="1.5" fill="#323e4b"/>
<rect x="439.1" y="330.8" width="1.5" height="1.5" fill="#323e4b"/>
<rect x="439.1" y="351.5" width="1.5" height="1.5" fill="#323e4b"/>
<rect x="439.1" y="372.3" width="1.5" height="1.5" fill="#323e4b"/>
<rect x="459.9" y="19.3" width="1.5" height="1.5" fill="#323e4b"/>
<rect x="459.9" y="40.1" width="1.5" height="1.5" fill="#323e4b"/>
<rect x="459.9" y="60.8" width="1.5" height="1.5" fill="#323e4b"/>
<rect x="459.9" y="81.6" width="1.5" height="1.5" fill="#323e4b"/>
<rect x="459.9" y="102.4" width="1.5" height="1.5" fill="#323e4b"/>
<rect x="459.9" y="123.1" width="1.5" height="1.5" fill="#323e4b"/>
<rect x="459.9" y="143.9" width="1.5" height="1.5" fill="#323e4b"/>
<rect x="459.9" y="164.7" width="1.5" height="1.5" fill="#323e4b"/>
<rect x="459.9" y="185.4" width="1.5" height="1.5" fill="#323e4b"/>
<rect x="459.9" y="206.2" width="1.5" height="1.5" fill="#323e4b"/>
<rect x="459.9" y="226.9" width="1.5" height="1.5" fill="#323e4b"/>
<rect x="459.9" y="247.7" width="1.5" height="1.5" fill="#323e4b"/>
<rect x="459.9" y="268.5" width="1.5" height="1.5" fill="#323e4b"/>
<rect x="459.9" y="289.2" width="1.5" height="1.5" fill="#323e4b"/>
<rect x="459.9" y="310.0" width="1.5" height="1.5" fill="#323e4b"/>
<rect x="459.9" y="330.8" width="1.5" height="1.5" fill="#323e4b"/>
<rect x="459.9" y="351.5" width="1.5" height="1.5" fill="#323e4b"/>
<rect x="459.9" y="372.3" width="1.5" height="1.5" fill="#323e4b"/>
<rect x="480.7" y="19.3" width="1.5" height="1.5" fill="#323e4b"/>
<rect x="480.7" y="40.1" width="1.5" height="1.5" fill="#323e4b"/>
<rect x="480.7" y="60.8" width="1.5" height="1.5" fill="#323e4b"/>
<rect x="480.7" y="81.6" width="1.5" height="1.5" fill="#323e4b"/>
<rect x="480.7" y="102.4" width="1.5" height="1.5" fill="#323e4b"/>
<rect x="480.7" y="123.1" width="1.5" height="1.5" fill="#323e4b"/>
<rect x="480.7" y="143.9" width="1.5" height="1.5" fill="#323e4b"/>
<rect x="480.7" y="164.7" width="1.5" height="1.5" fill="#323e4b"/>
<rect x="480.7" y="185.4" width="1.5" height="1.5" fill="#323e4b"/>
<rect x="480.7" y="206.2" width="1.5" height="1.5" fill="#323e4b"/>
<rect x="480.7" y="226.9" width="1.5" height="1.5" fill="#323e4b"/>
<rect x="480.7" y="247.7" width="1.5" height="1.5" fill="#323e4b"/>
<rect x="480.7" y="268.5" width="1.5" height="1.5" fill="#323e4b"/>
<rect x="480.7" y="289.2" width="1.5" height="1.5" fill="#323e4b"/>
<rect x="480.7" y="310.0" width="1.5" height="1.5" fill="#323e4b"/>
<rect x="480.7" y="330.8" width="1.5" height="1.5" fill="#323e4b"/>
<rect x="480.7" y="351.5" width="1.5" height="1.5" fill="#323e4b"/>
<rect x="480.7" y="372.3" width="1.5" height="1.5" fill="#323e4b"/>
<rect x="501.5" y="19.3" width="1.5" height="1.5" fill="#323e4b"/>
<rect x="501.5" y="40.1" width="1.5" height="1.5" fill="#323e4b"/>
<rect x="501.5" y="60.8" width="1.5" height="1.5" fill="#323e4b"/>
<rect x="501.5" y="81.6" width="1.5" height="1.5" fill="#323e4b"/>
<rect x="501.5" y="102.4" width="1.5" height="1.5" fill="#323e4b"/>
<rect x="501.5" y="123.1" width="1.5" height="1.5" fill="#323e4b"/>
<rect x="501.1" y="143.5" width="2.4" height="2.4" fill="#e8e8e8"/>
<rect x="501.5" y="164.7" width="1.5" height="1.5" fill="#323e4b"/>
<rect x="501.5" y="185.4" width="1.5" height="1.5" fill="#323e4b"/>
<rect x="501.5" y="206.2" width="1.5" height="1.5" fill="#323e4b"/>
<rect x="501.5" y="226.9" width="1.5" height="1.5" fill="#323e4b"/>
<rect x="501.5" y="247.7" width="1.5" height="1.5" fill="#323e4b"/>
<rect x="501.5" y="268.5" width="1.5" height="1.5" fill="#323e4b"/>
<rect x="501.5" y="289.2" width="1.5" height="1.5" fill="#323e4b"/>
<rect x="501.1" y="309.6" width="2.4" height="2.4" fill="#e8e8e8"/>
<rect x="501.5" y="330.8" width="1.5" height="1.5" fill="#323e4b"/>
<rect x="501.5" y="351.5" width="1.5" height="1.5" fill="#323e4b"/>
<rect x="501.5" y="372.3" width="1.5" height="1.5" fill="#323e4b"/>
<rect x="522.3" y="19.3" width="1.5" height="1.5" fill="#323e4b"/>
<rect x="522.3" y="40.1" width="1.5" height="1.5" fill="#323e4b"/>
<rect x="522.3" y="60.8" width="1.5" height="1.5" fill="#323e4b"/>
<rect x="522.3" y="81.6" width="1.5" height="1.5" fill="#323e4b"/>
<rect x="522.3" y="102.4" width="1.5" height="1.5" fill="#323e4b"/>
<rect x="522.3" y="123.1" width="1.5" height="1.5" fill="#323e4b"/>
<rect x="522.3" y="143.9" width="1.5" height="1.5" fill="#323e4b"/>
<rect x="522.3" y="164.7" width="1.5" height="1.5" fill="#323e4b"/>
<rect x="522.3" y="185.4" width="1.5" height="1.5" fill="#323e4b"/>
<rect x="522.3" y="206.2" width="1.5" height="1.5" fill="#323e4b"/>
<rect x="522.3" y="226.9" width="1.5" height="1.5" fill="#323e4b"/>
<rect x="522.3" y="247.7" width="1.5" height="1.5" fill="#323e4b"/>
<rect x="522.3" y="268.5" width="1.5" height="1.5" fill="#323e4b"/>
<rect x="522.3" y="289.2" width="1.5" height="1.5" fill="#323e4b"/>
<rect x="522.3" y="310.0" width="1.5" height="1.5" fill="#323e4b"/>
<rect x="522.3" y="330.8" width="1.5" height="1.5" fill="#323e4b"/>
<rect x="522.3" y="351.5" width="1.5" height="1.5" fill="#323e4b"/>
<rect x="522.3" y="372.3" width="1.5" height="1.5" fill="#323e4b"/>
<rect x="543.1" y="19.3" width="1.5" height="1.5" fill="#323e4b"/>
<rect x="543.1" y="40.1" width="1.5" height="1.5" fill="#323e4b"/>
<rect x="543.1" y="60.8" width="1.5" height="1.5" fill="#323e4b"/>
<rect x="543.1" y="81.6" width="1.5" height="1.5" fill="#323e4b"/>
<rect x="543.1" y="102.4" width="1.5" height="1.5" fill="#323e4b"/>
<rect x="543.1" y="123.1" width="1.5" height="1.5" fill="#323e4b"/>
<rect x="543.1" y="143.9" width="1.5" height="1.5" fill="#323e4b"/>
<rect x="543.1" y="164.7" width="1.5" height="1.5" fill="#323e4b"/>
<rect x="543.1" y="185.4" width="1.5" height="1.5" fill="#323e4b"/>
<rect x="543.1" y="206.2" width="1.5" height="1.5" fill="#323e4b"/>
<rect x="543.1" y="226.9" width="1.5" height="1.5" fill="#323e4b"/>
<rect x="543.1" y="247.7" width="1.5" height="1.5" fill="#323e4b"/>
<rect x="543.1" y="268.5" width="1.5" height="1.5" fill="#323e4b"/>
<rect x="543.1" y="289.2" width="1.5" height="1.5" fill="#323e4b"/>
<rect x="543.1" y="310.0" width="1.5" height="1.5" fill="#323e4b"/>
<rect x="543.1" y="330.8" width="1.5" height="1.5" fill="#323e4b"/>
<rect x="543.1" y="351.5" width="1.5" height="1.5" fill="#323e4b"/>
<rect x="543.1" y="372.3" width="1.5" height="1.5" fill="#323e4b"/>
<rect x="563.9" y="19.3" width="1.5" height="1.5" fill="#323e4b"/>
<rect x="563.9" y="40.1" width="1.5" height="1.5" fill="#323e4b"/>
<rect x="563.9" y="60.8" width="1.5" height="1.5" fill="#323e4b"/>
<rect x="563.9" y="81.6" width="1.5" height="1.5" fill="#323e4b"/>
<rect x="563.9" y="102.4" width="1.5" height="1.5" fill="#323e4b"/>
<rect x="563.9" y="123.1" width="1.5" height="1.5" fill="#323e4b"/>
<rect x="563.9" y="143.9" width="1.5" height="1.5" fill="#323e4b"/>
<rect x="563.9" y="164.7" width="1.5" height="1.5" fill="#323e4b"/>
<rect x="563.9" y="185.4" width="1.5" height="1.5" fill="#323e4b"/>
<rect x="563.9" y="206.2" width="1.5" height="1.5" fill="#323e4b"/>
<rect x="563.9" y="226.9" width="1.5" height="1.5" fill="#323e4b"/>
<rect x="563.9" y="247.7" width="1.5" height="1.5" fill="#323e4b"/>
<rect x="563.9" y="268.5" width="1.5" height="1.5" fill="#323e4b"/>
<rect x="563.9" y="289.2" width="1.5" height="1.5" fill="#323e4b"/>
<rect x="563.9" y="310.0" width="1.5" height="1.5" fill="#323e4b"/>
<rect x="563.9" y="330.8" width="1.5" height="1.5" fill="#323e4b"/>
<rect x="563.9" y="351.5" width="1.5" height="1.5" fill="#323e4b"/>
<rect x="563.9" y="372.3" width="1.5" height="1.5" fill="#323e4b"/>
<rect x="584.7" y="19.3" width="1.5" height="1.5" fill="#323e4b"/>
<rect x="584.7" y="40.1" width="1.5" height="1.5" fill="#323e4b"/>
<rect x="584.7" y="60.8" width="1.5" height="1.5" fill="#323e4b"/>
<rect x="584.7" y="81.6" width="1.5" height="1.5" fill="#323e4b"/>
<rect x="584.7" y="102.4" width="1.5" height="1.5" fill="#323e4b"/>
<rect x="584.7" y="123.1" width="1.5" height="1.5" fill="#323e4b"/>
<rect x="584.7" y="143.9" width="1.5" height="1.5" fill="#323e4b"/>
<rect x="584.7" y="164.7" width="1.5" height="1.5" fill="#323e4b"/>
<rect x="584.7" y="185.4" width="1.5" height="1.5" fill="#323e4b"/>
<rect x="584.7" y="206.2" width="1.5" height="1.5" fill="#323e4b"/>
<rect x="584.7" y="226.9" width="1.5" height="1.5" fill="#323e4b"/>
<rect x="584.7" y="247.7" width="1.5" height="1.5" fill="#323e4b"/>
<rect x="584.7" y="268.5" width="1.5" height="1.5" fill="#323e4b"/>
<rect x="584.7" y="289.2" width="1.5" height="1.5" fill="#323e4b"/>
<rect x="584.7" y="310.0" width="1.5" height="1.5" fill="#323e4b"/>
<rect x="584.7" y="330.8" width="1.5" height="1.5" fill="#323e4b"/>
<rect x="584.7" y="351.5" width="1.5" height="1.5" fill="#323e4b"/>
<rect x="584.7" y="372.3" width="1.5" height="1.5" fill="#323e4b"/>
<polyline points="294.4,102.6 294.4,81.8 460.7,81.8 460.7,102.6" fill="none" stroke="#2b9bd6" stroke-width="1.35"/>
<polyline points="294.4,164.9 294.4,206.4" fill="none" stroke="#2b9bd6" stroke-width="1.35"/>
<polyline points="294.4,268.7 294.4,310.2" fill="none" stroke="#2b9bd6" stroke-width="1.35"/>
<polyline points="294.4,372.5 294.4,397.4" fill="none" stroke="#2b9bd6" stroke-width="1.35"/>
<polyline points="460.7,164.9 460.7,206.4" fill="none" stroke="#2b9bd6" stroke-width="1.35"/>
<polyline points="460.7,268.7 460.7,310.2" fill="none" stroke="#2b9bd6" stroke-width="1.35"/>
<polyline points="460.7,372.5 460.7,397.4" fill="none" stroke="#2b9bd6" stroke-width="1.35"/>
<polyline points="273.6,133.7 294.4,133.7" fill="none" stroke="#2b9bd6" stroke-width="1.35"/>
<polyline points="460.7,133.7 481.5,133.7" fill="none" stroke="#2b9bd6" stroke-width="1.35"/>
<polyline points="273.6,237.5 294.4,237.5" fill="none" stroke="#2b9bd6" stroke-width="1.35"/>
<polyline points="460.7,237.5 481.5,237.5" fill="none" stroke="#2b9bd6" stroke-width="1.35"/>
<polyline points="273.6,341.4 294.4,341.4" fill="none" stroke="#2b9bd6" stroke-width="1.35"/>
<polyline points="460.7,341.4 481.5,341.4" fill="none" stroke="#2b9bd6" stroke-width="1.35"/>
<polyline points="336.0,133.7 419.1,133.7" fill="none" stroke="#2b9bd6" stroke-width="1.35"/>
<polyline points="336.0,341.4 419.1,341.4" fill="none" stroke="#2b9bd6" stroke-width="1.35"/>
<g filter="url(#bl)"><circle cx="336.0" cy="237.5" r="8.5" fill="#7a7a08"/><circle cx="419.1" cy="237.5" r="8.5" fill="#7a7a08"/><rect x="336.0" y="236.0" width="83.2" height="11" fill="#7a7a08"/></g>
<rect x="336.0" y="237.5" width="83.2" height="8" fill="#74740a"/>
<polyline points="336.0,237.5 419.1,237.5" fill="none" stroke="#2b9bd6" stroke-width="1.4"/>
<polyline points="344.0,239.3 411.1,239.3" fill="none" stroke="#c06a10" stroke-width="1.2" stroke-dasharray="3 1.5"/>
<polyline points="107.5,237.5 221.6,237.5 221.6,185.6 294.4,185.6" fill="none" stroke="#2b9bd6" stroke-width="1.35"/>
<polyline points="294.4,289.4 356.8,289.4 356.8,343.4" fill="none" stroke="#2b9bd6" stroke-width="1.35"/>
<polyline points="356.8,343.4 356.8,397.4" fill="none" stroke="#2b9bd6" stroke-width="1.6" stroke-dasharray="14 3"/>
<polyline points="460.7,289.4 513.0,289.4" fill="none" stroke="#2b9bd6" stroke-width="1.35"/>
<polyline points="294.4,102.6 294.4,118.2 315.2,118.2" fill="none" stroke="#1fa050" stroke-width="1.35"/>
<polyline points="315.2,149.0 294.4,149.0 294.4,164.9" fill="none" stroke="#1fa050" stroke-width="1.35"/>
<polyline points="296.7,112.2 307.7,118.2 296.7,123.4" fill="none" stroke="#1fa050" stroke-width="1.3"/>
<polyline points="315.2,116.7 315.2,150.5" fill="none" stroke="#1fa050" stroke-width="1.35"/>
<polyline points="319.6,116.7 319.6,150.5" fill="none" stroke="#1fa050" stroke-width="1.35"/>
<polyline points="319.6,133.7 336.0,133.7" fill="none" stroke="#1fa050" stroke-width="1.35"/>
<polyline points="294.4,133.7 315.2,133.7" fill="none" stroke="#1fa050" stroke-width="1.35"/>
<polyline points="460.7,102.6 460.7,118.2 439.9,118.2" fill="none" stroke="#1fa050" stroke-width="1.35"/>
<polyline points="439.9,149.0 460.7,149.0 460.7,164.9" fill="none" stroke="#1fa050" stroke-width="1.35"/>
<polyline points="458.4,112.2 447.4,118.2 458.4,123.4" fill="none" stroke="#1fa050" stroke-width="1.3"/>
<polyline points="439.9,116.7 439.9,150.5" fill="none" stroke="#1fa050" stroke-width="1.35"/>
<polyline points="435.5,116.7 435.5,150.5" fill="none" stroke="#1fa050" stroke-width="1.35"/>
<polyline points="435.5,133.7 419.1,133.7" fill="none" stroke="#1fa050" stroke-width="1.35"/>
<polyline points="460.7,133.7 439.9,133.7" fill="none" stroke="#1fa050" stroke-width="1.35"/>
<polyline points="294.4,206.4 294.4,222.0 315.2,222.0" fill="none" stroke="#1fa050" stroke-width="1.35"/>
<polyline points="315.2,252.8 294.4,252.8 294.4,268.7" fill="none" stroke="#1fa050" stroke-width="1.35"/>
<polyline points="296.7,216.0 307.7,222.0 296.7,227.2" fill="none" stroke="#1fa050" stroke-width="1.3"/>
<polyline points="315.2,220.5 315.2,254.3" fill="none" stroke="#1fa050" stroke-width="1.35"/>
<polyline points="319.6,220.5 319.6,254.3" fill="none" stroke="#1fa050" stroke-width="1.35"/>
<polyline points="319.6,237.5 336.0,237.5" fill="none" stroke="#1fa050" stroke-width="1.35"/>
<polyline points="294.4,237.5 315.2,237.5" fill="none" stroke="#1fa050" stroke-width="1.35"/>
<polyline points="460.7,206.4 460.7,222.0 439.9,222.0" fill="none" stroke="#1fa050" stroke-width="1.35"/>
<polyline points="439.9,252.8 460.7,252.8 460.7,268.7" fill="none" stroke="#1fa050" stroke-width="1.35"/>
<polyline points="458.4,216.0 447.4,222.0 458.4,227.2" fill="none" stroke="#1fa050" stroke-width="1.3"/>
<polyline points="439.9,220.5 439.9,254.3" fill="none" stroke="#1fa050" stroke-width="1.35"/>
<polyline points="435.5,220.5 435.5,254.3" fill="none" stroke="#1fa050" stroke-width="1.35"/>
<polyline points="435.5,237.5 419.1,237.5" fill="none" stroke="#1fa050" stroke-width="1.35"/>
<polyline points="460.7,237.5 439.9,237.5" fill="none" stroke="#1fa050" stroke-width="1.35"/>
<polyline points="294.4,310.2 294.4,325.9 315.2,325.9" fill="none" stroke="#1fa050" stroke-width="1.35"/>
<polyline points="315.2,356.7 297.4,356.7" fill="none" stroke="#1fa050" stroke-width="1.6" stroke-dasharray="5 2.5"/>
<polyline points="294.4,357.7 294.4,372.5" fill="none" stroke="#1fa050" stroke-width="1.6" stroke-dasharray="6 3"/>
<polyline points="306.4,351.2 296.9,357.2 305.4,361.7" fill="none" stroke="#1fa050" stroke-width="1.3"/>
<polyline points="315.2,324.4 315.2,358.2" fill="none" stroke="#1fa050" stroke-width="1.35"/>
<polyline points="319.6,324.4 319.6,358.2" fill="none" stroke="#1fa050" stroke-width="1.35"/>
<polyline points="319.6,341.4 336.0,341.4" fill="none" stroke="#1fa050" stroke-width="1.35"/>
<polyline points="294.4,341.4 315.2,341.4" fill="none" stroke="#1fa050" stroke-width="1.35"/>
<polyline points="460.7,310.2 460.7,325.9 439.9,325.9" fill="none" stroke="#1fa050" stroke-width="1.35"/>
<polyline points="439.9,356.7 457.7,356.7" fill="none" stroke="#1fa050" stroke-width="1.6" stroke-dasharray="5 2.5"/>
<polyline points="460.7,357.7 460.7,372.5" fill="none" stroke="#1fa050" stroke-width="1.6" stroke-dasharray="6 3"/>
<polyline points="448.7,351.2 458.2,357.2 449.7,361.7" fill="none" stroke="#1fa050" stroke-width="1.3"/>
<polyline points="439.9,324.4 439.9,358.2" fill="none" stroke="#1fa050" stroke-width="1.35"/>
<polyline points="435.5,324.4 435.5,358.2" fill="none" stroke="#1fa050" stroke-width="1.35"/>
<polyline points="435.5,341.4 419.1,341.4" fill="none" stroke="#1fa050" stroke-width="1.35"/>
<polyline points="460.7,341.4 439.9,341.4" fill="none" stroke="#1fa050" stroke-width="1.35"/>
<rect x="289.6" y="97.8" width="9.6" height="9.6" fill="#f20c0c"/>
<rect x="455.9" y="97.8" width="9.6" height="9.6" fill="#f20c0c"/>
<rect x="289.6" y="128.9" width="9.6" height="9.6" fill="#f20c0c"/>
<rect x="455.9" y="128.9" width="9.6" height="9.6" fill="#f20c0c"/>
<rect x="289.6" y="160.1" width="9.6" height="9.6" fill="#f20c0c"/>
<rect x="455.9" y="160.1" width="9.6" height="9.6" fill="#f20c0c"/>
<rect x="289.6" y="201.6" width="9.6" height="9.6" fill="#f20c0c"/>
<rect x="455.9" y="201.6" width="9.6" height="9.6" fill="#f20c0c"/>
<rect x="289.6" y="232.7" width="9.6" height="9.6" fill="#f20c0c"/>
<rect x="455.9" y="232.7" width="9.6" height="9.6" fill="#f20c0c"/>
<rect x="289.6" y="263.9" width="9.6" height="9.6" fill="#f20c0c"/>
<rect x="455.9" y="263.9" width="9.6" height="9.6" fill="#f20c0c"/>
<rect x="289.6" y="305.4" width="9.6" height="9.6" fill="#f20c0c"/>
<rect x="455.9" y="305.4" width="9.6" height="9.6" fill="#f20c0c"/>
<rect x="289.6" y="336.6" width="9.6" height="9.6" fill="#f20c0c"/>
<rect x="455.9" y="336.6" width="9.6" height="9.6" fill="#f20c0c"/>
<rect x="289.6" y="367.7" width="9.6" height="9.6" fill="#f20c0c"/>
<rect x="455.9" y="367.7" width="9.6" height="9.6" fill="#f20c0c"/>
<rect x="331.2" y="128.9" width="9.6" height="9.6" fill="#f20c0c"/>
<rect x="414.3" y="128.9" width="9.6" height="9.6" fill="#f20c0c"/>
<rect x="331.2" y="232.7" width="9.6" height="9.6" fill="#f20c0c"/>
<rect x="414.3" y="232.7" width="9.6" height="9.6" fill="#f20c0c"/>
<rect x="331.2" y="336.6" width="9.6" height="9.6" fill="#f20c0c"/>
<rect x="414.3" y="336.6" width="9.6" height="9.6" fill="#f20c0c"/>
<circle cx="294.4" cy="185.6" r="5" fill="#2fa8e8"/>
<circle cx="294.4" cy="289.4" r="5" fill="#2fa8e8"/>
<circle cx="460.7" cy="289.4" r="5" fill="#2fa8e8"/>
<polygon points="86.0,93.1 98.6,93.1 107.8,102.6 98.6,112.1 86.0,112.1" fill="#f20c0c" stroke="#3c8a3c" stroke-width="0.6"/>
<polygon points="86.0,124.2 98.6,124.2 107.8,133.7 98.6,143.2 86.0,143.2" fill="#f20c0c" stroke="#3c8a3c" stroke-width="0.6"/>
<polygon points="86.0,155.4 98.6,155.4 107.8,164.9 98.6,174.4 86.0,174.4" fill="#f20c0c" stroke="#3c8a3c" stroke-width="0.6"/>
<polygon points="86.0,186.5 98.6,186.5 107.8,196.0 98.6,205.5 86.0,205.5" fill="#f20c0c" stroke="#3c8a3c" stroke-width="0.6"/>
<polygon points="86.0,228.0 98.6,228.0 107.8,237.5 98.6,247.0 86.0,247.0" fill="#f20c0c" stroke="#3c8a3c" stroke-width="0.6"/>
<polygon points="512.3,279.9 524.9,279.9 534.1,289.4 524.9,298.9 512.3,298.9" fill="#f20c0c" stroke="#3c8a3c" stroke-width="0.6"/>
<text x="34.0" y="108.2" fill="#d01414" font-size="16.5" text-anchor="start" class="pin" textLength="41.5" lengthAdjust="spacingAndGlyphs">pbias</text>
<text x="29.8" y="139.3" fill="#d01414" font-size="16.5" text-anchor="start" class="pin" textLength="46.2" lengthAdjust="spacingAndGlyphs">pcasc</text>
<text x="34.0" y="170.5" fill="#d01414" font-size="16.5" text-anchor="start" class="pin" textLength="41.5" lengthAdjust="spacingAndGlyphs">nbias</text>
<text x="29.8" y="201.6" fill="#d01414" font-size="16.5" text-anchor="start" class="pin" textLength="46.2" lengthAdjust="spacingAndGlyphs">ncasc</text>
<text x="61.5" y="243.1" fill="#d01414" font-size="16.5" text-anchor="start" class="pin" textLength="13.5" lengthAdjust="spacingAndGlyphs">in</text>
<text x="538.3" y="295.0" fill="#d01414" font-size="16.5" text-anchor="start" class="pin" textLength="25.5" lengthAdjust="spacingAndGlyphs">out</text>
<text x="282.5" y="98.4" fill="#f20c0c" font-size="13.5" text-anchor="end" class="sch" textLength="15.5" lengthAdjust="spacingAndGlyphs">M1</text>
<text x="289.0" y="113.4" fill="#da8420" font-size="12.6" text-anchor="end" class="sch" textLength="121.0" lengthAdjust="spacingAndGlyphs">&quot;gpdk090_pmos1v&quot;</text>
<text x="289.0" y="129.1" fill="#da8420" font-size="12.6" text-anchor="end" class="sch" textLength="43.0" lengthAdjust="spacingAndGlyphs">w=25u</text>
<text x="288.0" y="159.9" fill="#da8420" font-size="12.6" text-anchor="end" class="sch" textLength="44.0" lengthAdjust="spacingAndGlyphs">l=640n</text>
<text x="288.0" y="175.9" fill="#da8420" font-size="12.6" text-anchor="end" class="sch" textLength="22.0" lengthAdjust="spacingAndGlyphs">m:1</text>
<text x="282.5" y="202.2" fill="#f20c0c" font-size="13.5" text-anchor="end" class="sch" textLength="15.5" lengthAdjust="spacingAndGlyphs">M3</text>
<text x="289.0" y="217.2" fill="#da8420" font-size="12.6" text-anchor="end" class="sch" textLength="121.0" lengthAdjust="spacingAndGlyphs">&quot;gpdk090_pmos1v&quot;</text>
<text x="289.0" y="232.9" fill="#da8420" font-size="12.6" text-anchor="end" class="sch" textLength="43.0" lengthAdjust="spacingAndGlyphs">w=25u</text>
<text x="288.0" y="263.7" fill="#da8420" font-size="12.6" text-anchor="end" class="sch" textLength="44.0" lengthAdjust="spacingAndGlyphs">l=280n</text>
<text x="288.0" y="279.7" fill="#da8420" font-size="12.6" text-anchor="end" class="sch" textLength="22.0" lengthAdjust="spacingAndGlyphs">m:1</text>
<text x="282.5" y="306.0" fill="#f20c0c" font-size="13.5" text-anchor="end" class="sch" textLength="15.5" lengthAdjust="spacingAndGlyphs">M5</text>
<text x="289.0" y="321.0" fill="#da8420" font-size="12.6" text-anchor="end" class="sch" textLength="121.0" lengthAdjust="spacingAndGlyphs">&quot;gpdk090_nmos1v&quot;</text>
<text x="289.0" y="336.7" fill="#da8420" font-size="12.6" text-anchor="end" class="sch" textLength="40.5" lengthAdjust="spacingAndGlyphs">w=11u</text>
<text x="288.0" y="367.5" fill="#da8420" font-size="12.6" text-anchor="end" class="sch" textLength="44.0" lengthAdjust="spacingAndGlyphs">l=900n</text>
<text x="288.0" y="383.5" fill="#da8420" font-size="12.6" text-anchor="end" class="sch" textLength="22.0" lengthAdjust="spacingAndGlyphs">m:1</text>
<text x="471.5" y="98.4" fill="#f20c0c" font-size="13.5" text-anchor="start" class="sch" textLength="16.5" lengthAdjust="spacingAndGlyphs">M2</text>
<text x="465.7" y="113.4" fill="#da8420" font-size="12.6" text-anchor="start" class="sch" textLength="121.0" lengthAdjust="spacingAndGlyphs">&quot;gpdk090_pmos1v&quot;</text>
<text x="465.7" y="129.1" fill="#da8420" font-size="12.6" text-anchor="start" class="sch" textLength="43.0" lengthAdjust="spacingAndGlyphs">w=25u</text>
<text x="465.7" y="159.9" fill="#da8420" font-size="12.6" text-anchor="start" class="sch" textLength="44.0" lengthAdjust="spacingAndGlyphs">l=640n</text>
<text x="465.7" y="175.9" fill="#da8420" font-size="12.6" text-anchor="start" class="sch" textLength="22.0" lengthAdjust="spacingAndGlyphs">m:1</text>
<text x="471.5" y="202.2" fill="#f20c0c" font-size="13.5" text-anchor="start" class="sch" textLength="16.5" lengthAdjust="spacingAndGlyphs">M4</text>
<text x="465.7" y="217.2" fill="#da8420" font-size="12.6" text-anchor="start" class="sch" textLength="121.0" lengthAdjust="spacingAndGlyphs">&quot;gpdk090_pmos1v&quot;</text>
<text x="465.7" y="232.9" fill="#da8420" font-size="12.6" text-anchor="start" class="sch" textLength="43.0" lengthAdjust="spacingAndGlyphs">w=25u</text>
<text x="465.7" y="263.7" fill="#da8420" font-size="12.6" text-anchor="start" class="sch" textLength="44.0" lengthAdjust="spacingAndGlyphs">l=280n</text>
<text x="465.7" y="279.7" fill="#da8420" font-size="12.6" text-anchor="start" class="sch" textLength="22.0" lengthAdjust="spacingAndGlyphs">m:1</text>
<text x="471.5" y="306.0" fill="#f20c0c" font-size="13.5" text-anchor="start" class="sch" textLength="16.5" lengthAdjust="spacingAndGlyphs">M6</text>
<text x="465.7" y="321.0" fill="#da8420" font-size="12.6" text-anchor="start" class="sch" textLength="121.0" lengthAdjust="spacingAndGlyphs">&quot;gpdk090_nmos1v&quot;</text>
<text x="465.7" y="336.7" fill="#da8420" font-size="12.6" text-anchor="start" class="sch" textLength="40.5" lengthAdjust="spacingAndGlyphs">w=11u</text>
<text x="465.7" y="367.5" fill="#da8420" font-size="12.6" text-anchor="start" class="sch" textLength="44.0" lengthAdjust="spacingAndGlyphs">l=900n</text>
<text x="465.7" y="383.5" fill="#da8420" font-size="12.6" text-anchor="start" class="sch" textLength="22.0" lengthAdjust="spacingAndGlyphs">m:1</text>
<text x="305.0" y="98.4" fill="#c8c832" font-size="12.8" text-anchor="start" class="sch" textLength="47.5" lengthAdjust="spacingAndGlyphs">pmos1v</text>
<text x="403.0" y="98.4" fill="#c8c832" font-size="12.8" text-anchor="start" class="sch" textLength="47.5" lengthAdjust="spacingAndGlyphs">pmos1v</text>
<text x="305.0" y="202.2" fill="#c8c832" font-size="12.8" text-anchor="start" class="sch" textLength="47.5" lengthAdjust="spacingAndGlyphs">pmos1v</text>
<text x="403.0" y="202.2" fill="#c8c832" font-size="12.8" text-anchor="start" class="sch" textLength="47.5" lengthAdjust="spacingAndGlyphs">pmos1v</text>
<text x="305.0" y="306.0" fill="#c8c832" font-size="12.8" text-anchor="start" class="sch" textLength="47.5" lengthAdjust="spacingAndGlyphs">nmos1v</text>
<text x="403.0" y="306.0" fill="#c8c832" font-size="12.8" text-anchor="start" class="sch" textLength="47.5" lengthAdjust="spacingAndGlyphs">nmos1v</text>
<text x="359.5" y="75.8" fill="#36a4e0" font-size="9" text-anchor="start" class="sch" textLength="16.0" lengthAdjust="spacingAndGlyphs">vddl</text>
<text x="368.0" y="127.4" fill="#36a4e0" font-size="9" text-anchor="start" class="sch" textLength="20.5" lengthAdjust="spacingAndGlyphs">pbias</text>
<text x="368.0" y="231.2" fill="#36a4e0" font-size="9" text-anchor="start" class="sch" textLength="20.5" lengthAdjust="spacingAndGlyphs">pcasc</text>
<text x="368.0" y="335.1" fill="#36a4e0" font-size="9" text-anchor="start" class="sch" textLength="20.5" lengthAdjust="spacingAndGlyphs">ncasc</text>
<text x="275.5" y="127.4" fill="#36a4e0" font-size="9" text-anchor="start" class="sch" textLength="16.0" lengthAdjust="spacingAndGlyphs">vddl</text>
<text x="463.5" y="127.4" fill="#36a4e0" font-size="9" text-anchor="start" class="sch" textLength="16.0" lengthAdjust="spacingAndGlyphs">vddl</text>
<text x="275.5" y="231.2" fill="#36a4e0" font-size="9" text-anchor="start" class="sch" textLength="16.0" lengthAdjust="spacingAndGlyphs">vddl</text>
<text x="463.5" y="231.2" fill="#36a4e0" font-size="9" text-anchor="start" class="sch" textLength="16.0" lengthAdjust="spacingAndGlyphs">vddl</text>
<text x="273.0" y="335.1" fill="#6ab4e4" font-size="11" text-anchor="start" class="sch" textLength="23.0" lengthAdjust="spacingAndGlyphs">gnd!</text>
<text x="460.5" y="335.1" fill="#6ab4e4" font-size="11" text-anchor="start" class="sch" textLength="23.0" lengthAdjust="spacingAndGlyphs">gnd!</text>
<text x="256.0" y="179.0" fill="#3aa0dc" font-size="15" text-anchor="start" class="sch" textLength="13.0" lengthAdjust="spacingAndGlyphs">in</text>
<path d="M 287.5 374.0 A 9 9 0 0 1 299.5 384.0" fill="none" stroke="#04040e" stroke-width="2.4"/>
<path d="M 454.0 374.0 A 9 9 0 0 1 466.0 384.0" fill="none" stroke="#04040e" stroke-width="2.4"/>
</svg>
<div class="abs" style="left:625.200px;top:120.500px;width:1.500px;height:399px;background:#333;"></div>
<div class="abs" style="left:627.400px;top:98px;width:7.600px;height:420px;background:linear-gradient(90deg,#d8d8d4,#bcbcb8);"></div>

<!-- status bar -->
<div class="abs" style="left:16px;top:518px;width:922px;height:21px;background:linear-gradient(#ecece9,#dcdfd8 35%,#c6cac2 80%,#b2b6ae);border-bottom:1px solid #9a9e96;box-sizing:border-box;"></div>
<div class="abs" style="left:16px;top:518.500px;width:610px;height:1.300px;background:#222;"></div>
<div class="abs" style="left:16px;top:539px;width:922px;height:26px;background:#f4f4f2;"></div>
<div class="abs" style="left:16px;top:561px;width:922px;height:1px;background:#a0a09e;"></div>
<div class="abs" style="left:16px;top:541px;width:29px;height:20px;background:#f1dcda;border-right:1px solid #999;"></div>
<div class="abs" style="left:22px;top:527px;width:5px;height:6px;background:repeating-linear-gradient(90deg,#a4a4a0 0 1px,#dcdcd8 1px 2px);"></div>
<div class="t st" style="left:30.500px;top:523px;">mouse L: schSingleSelectPt()</div>
<div class="t st" style="left:453.500px;top:523px;">M: schHiDescendEdit()</div>
<div class="t st" style="left:875px;top:523px;">R: schHiMo</div>
<div class="t" style="left:18px;top:544px;color:#444;">3(8)</div>
<div class="t" style="left:57px;top:544px;color:#444;">&gt;</div>

<!-- right panel -->
<div class="abs" style="left:635px;top:98px;width:303px;height:420px;background:#f4f4f2;"></div>
<div class="abs" style="left:635px;top:99px;width:302px;height:19px;background:linear-gradient(#d80c10,#c00a0e 45%,#8e0608);"></div>
<div class="t" style="left:648px;top:101px;font-family:'DejaVu Sans Condensed','DejaVu Sans',sans-serif;font-weight:bold;font-size:11.4px;color:#fff;line-height:16px;" id="cmtitle">Constraint Manager</div>
<div class="abs" style="left:635px;top:118px;width:302px;height:31px;background:linear-gradient(#efefec,#e0e2dd 40%,#c9cdc5 80%,#b4b8b0);"></div>
<div class="abs" style="left:635px;top:149px;width:302px;height:1px;background:#a4a8a0;"></div>
<svg class="abs" style="left:643px;top:126px" width="18" height="17" viewBox="0 0 18 17"><rect x="1" y="1" width="15.500" height="15" rx="1.500" fill="#4f74c8" stroke="#2c4a98"/><rect x="3.500" y="1.500" width="10.500" height="8" fill="#f8f9fc"/><rect x="5" y="11.500" width="8" height="4.500" fill="#b9c6e4"/></svg>
<svg class="abs" style="left:667px;top:131px" width="10" height="7"><path d="M.5 1 H9 L4.700 6 Z" fill="#c8141a"/></svg>
<svg class="abs" style="left:685px;top:126px" width="17" height="17"><rect x="1" y="1" width="14" height="14" fill="none" stroke="#c8a898" stroke-width="1" stroke-dasharray="2 1.500"/><circle cx="8" cy="8" r="5" fill="#a4c8a4" stroke="#8cb08c"/><path d="M8 5.500 V10.500 M5.500 8 H10.500" stroke="#f0f4f0" stroke-width="1.500"/></svg>
<svg class="abs" style="left:709px;top:131px" width="10" height="7"><path d="M.5 1 H9 L4.700 6 Z" fill="#c8141a"/></svg>
<svg class="abs" style="left:726px;top:125px" width="20" height="20"><rect x="1.500" y="1.500" width="7" height="9" rx="1" fill="#fff" stroke="#333" stroke-width="1.200"/><rect x="10.500" y="5.500" width="7" height="9" rx="1" fill="#fff" stroke="#333" stroke-width="1.200"/><path d="M4 3.500 V8.500 M13 7.500 V12.500" stroke="#d03030" stroke-width="1.600" stroke-dasharray="1.500 1"/><path d="M9 17.500 H17" stroke="#5a28d8" stroke-width="1.600" stroke-dasharray="1.800 1"/></svg>
<svg class="abs" style="left:751px;top:131px" width="10" height="7"><path d="M.5 1 H9 L4.700 6 Z" fill="#c8141a"/></svg>
<svg class="abs" style="left:769px;top:126px" width="18" height="16"><path d="M2 9 L6.500 13 L15.500 2.500" fill="none" stroke="#7cc47c" stroke-width="3.200"/></svg>
<svg class="abs" style="left:794px;top:131px" width="10" height="7"><path d="M.5 1 H9 L4.700 6 Z" fill="#c8141a"/></svg>
<svg class="abs" style="left:810px;top:124px" width="20" height="20"><path d="M4 8 L9.500 2.500 V5.500 C15.500 5.500 17.500 10.500 14.500 15 C14.500 11 12.500 9.500 9.500 9.500 V12.500 Z" fill="#e8a028" stroke="#3a2a10" stroke-width="1"/><rect x="4" y="11" width="7" height="6.500" fill="#38b048"/><rect x="2" y="10.500" width="2.500" height="2.500" fill="#e03030"/><rect x="2" y="15.500" width="2.500" height="2.500" fill="#e03030"/><rect x="11" y="13" width="2.500" height="2.500" fill="#e03030"/></svg>
<div class="abs" style="left:838px;top:120px;width:28px;height:28px;border-radius:3px;background:linear-gradient(#c8ccc4,#d4d7d0 70%,#e8e9e5);"></div>
<svg class="abs" style="left:843px;top:125px" width="20" height="20"><rect x="2.500" y="2.500" width="11" height="14" fill="#fcfcfa" stroke="#555" stroke-width="1.200"/><path d="M5.500 14.500 L7 11 L15 2.500 L17.500 4.500 L9 13 Z" fill="#f0b030" stroke="#8a5a10" stroke-width=".8"/><path d="M15 2.500 L17.500 4.500" stroke="#d04040" stroke-width="2"/></svg>
<svg class="abs" style="left:875px;top:126px" width="18" height="18"><circle cx="8.500" cy="8.500" r="7.300" fill="#ee9a9a" stroke="#d84848" stroke-width="1.500"/><path d="M5.500 5.500 L11.500 11.500 M11.500 5.500 L5.500 11.500" stroke="#fff" stroke-width="2.200"/></svg>
<svg class="abs" style="left:906px;top:125px" width="20" height="20"><path d="M9 2 L3 10 H8 Z" fill="#d8a070" stroke="#777" stroke-width=".8"/><rect x="2.500" y="10" width="4" height="4" fill="#7088c0"/><rect x="7.500" y="10" width="4" height="4" fill="#8a9cc8"/><path d="M11 7 L16.500 13 L13.500 13.300 L15 16.500 L13.500 17 L12.300 14 L10.500 15.500 Z" fill="#e8e8e8" stroke="#555" stroke-width=".8"/></svg>

<div class="t" style="left:639px;top:154px;font-size:12.2px;color:#555;"><b style="color:#333">Editing:</b> constraint (modified)</div>
<div class="t" style="left:639px;top:174px;font-size:12.2px;color:#333;"><b>Show:</b></div>
<div class="abs" style="left:696px;top:171px;width:250px;height:21px;border:1px solid #b4b7af;border-radius:4px;background:linear-gradient(#fdfdfc,#e9eae6);box-sizing:border-box;box-shadow:0 1px 1px #c8c8c4;"></div>
<svg class="abs" style="left:699px;top:173px" width="16" height="17"><path d="M1.500 2 H13.500 L9 8 V14.500 L6.500 13 V8 Z" fill="#f0a030" stroke="#c87818" stroke-width=".8"/></svg>
<div class="t" style="left:718px;top:174px;font-size:12.2px;color:#444;">All</div>

<!-- tree table -->
<div class="abs" style="left:637px;top:197px;width:301px;height:136px;background:#fdfdfd;border-top:2px solid #333;border-left:2px solid #333;box-sizing:border-box;"></div>
<div class="abs" style="left:639px;top:199px;width:299px;height:18px;background:linear-gradient(#b4b8b0,#a0a49c 60%,#9a9e96);border-bottom:1px solid #8c9088;box-sizing:border-box;"></div>
<div class="abs" style="left:838px;top:200px;width:1px;height:16px;background:#8a8e86;"></div>
<div class="abs" style="left:839px;top:200px;width:1px;height:16px;background:#c0c4bc;"></div>
<div class="abs" style="left:922px;top:200px;width:1px;height:16px;background:#8a8e86;"></div>
<div class="abs" style="left:923px;top:200px;width:1px;height:16px;background:#c0c4bc;"></div>
<svg class="abs" style="left:640px;top:200px" width="16" height="16"><path d="M1.500 2.500 L7.500 9 L13.500 2.500 M7.500 9 V15" fill="none" stroke="#848880" stroke-width="1.500"/></svg>
<div class="t" style="left:720px;top:201px;font-size:12.2px;color:#63665f;">Type (2)</div>
<svg class="abs" style="left:826px;top:205px" width="10" height="7"><path d="M1 1.500 H8.500 L4.700 5.500 Z" fill="#f4f4f2"/></svg>
<svg class="abs" style="left:841px;top:200px" width="18" height="16"><circle cx="8.500" cy="5" r="3.800" fill="#d85050"/><circle cx="5" cy="10.500" r="3.800" fill="#cc3c3c"/><circle cx="12" cy="10.500" r="3.800" fill="#d04444"/><circle cx="7.500" cy="4" r="1.500" fill="#eea0a0"/></svg>
<svg class="abs" style="left:924px;top:200px" width="14" height="16"><path d="M6 1 V8 L1 14 M6 8 L13 12" fill="none" stroke="#6a88c8" stroke-width="2.200"/></svg>

<!-- rows -->
<svg class="abs" style="left:640px;top:218px" width="18" height="16" viewBox="0 0 18 16"><path d="M1.500 13 V2.500 H6.500 L8 4.500 H14 V7" fill="#f3b25a" stroke="#c98428" stroke-width="1"/><path d="M1.500 13.500 L4.500 7 H16.500 L13.500 13.500 Z" fill="#fdfdfd" stroke="#d69a48" stroke-width="1"/></svg>
<div class="t" style="left:663px;top:219px;font-size:12.2px;color:#111;font-weight:bold;font-style:italic;">ampp (2)</div>
<div class="t" style="left:843px;top:219px;font-size:12.2px;color:#111;font-weight:bold;font-style:italic;">constraint</div>

<div class="abs" style="left:648px;top:233px;width:1px;height:24px;background:repeating-linear-gradient(#888 0 1px,#fdfdfd 1px 2px);"></div>
<div class="abs" style="left:644px;top:237px;width:9px;height:9px;border:1px solid #777;background:#fff;box-sizing:border-box;"></div>
<div class="abs" style="left:646px;top:241px;width:5px;height:1px;background:#222;"></div>
<div class="abs" style="left:648px;top:239px;width:1px;height:5px;background:#222;"></div>
<div class="abs" style="left:653px;top:241px;width:5px;height:1px;background:repeating-linear-gradient(90deg,#888 0 1px,#fdfdfd 1px 2px);"></div>
<svg class="abs" style="left:661px;top:234px" width="18" height="15" viewBox="0 0 18 15"><rect x="1.500" y="1" width="5" height="9.500" fill="#5a80cc" stroke="#3c5ea8" stroke-width=".8"/><rect x="11.500" y="1" width="5" height="9.500" fill="#5a80cc" stroke="#3c5ea8" stroke-width=".8"/><rect x="0.500" y="11" width="7" height="3" fill="#5a80cc"/><rect x="10.500" y="11" width="7" height="3" fill="#5a80cc"/><rect x="8.200" y="0" width="1.600" height="15" fill="#d04040"/></svg>
<div class="t" style="left:684px;top:234px;font-size:12.2px;color:#444;">Symmetry (2)</div>
<div class="t" style="left:843px;top:234px;font-size:12.2px;color:#444;">Mirror Empty</div>
<svg class="abs" style="left:929px;top:232px" width="9" height="17"><path d="M5 1 L2 4.500 V12.500 L5 16 L8 12.500 V4.500 Z" fill="#c8d6f0" stroke="#4a6cb8" stroke-width="1.300"/></svg>

<div class="abs" style="left:659px;top:249px;width:279px;height:16px;background:#7c7c7a;"></div>
<div class="abs" style="left:644px;top:253px;width:9px;height:9px;border:1px solid #777;background:#fff;box-sizing:border-box;"></div>
<div class="abs" style="left:646px;top:257px;width:5px;height:1px;background:#222;"></div>
<div class="abs" style="left:648px;top:255px;width:1px;height:5px;background:#222;"></div>
<div class="abs" style="left:653px;top:257px;width:6px;height:1px;background:repeating-linear-gradient(90deg,#888 0 1px,#fdfdfd 1px 2px);"></div>
<svg class="abs" style="left:661px;top:249px" width="17" height="16"><rect x="1" y="1" width="14.500" height="14" fill="#747472" stroke="#8c5c5c" stroke-width="1" stroke-dasharray="1.500 1.500"/><circle cx="8.300" cy="8" r="5.300" fill="#4f9a52" stroke="#7c8c7c" stroke-width="1"/><path d="M6 5.800 H10.600 M8.300 5.800 V10.500" stroke="#d8ead8" stroke-width="1.400"/></svg>
<div class="t" style="left:684px;top:250px;font-size:12.2px;color:#f0f0f0;">Current (2)</div>

<!-- splitter -->
<div class="abs" style="left:635px;top:333px;width:303px;height:8px;background:linear-gradient(#f4f4f2,#dededa 55%,#f0f0ee);"></div>

<!-- combos -->
<div class="abs" style="left:637px;top:341px;width:186px;height:21px;border:1px solid #b4b7af;border-radius:4px;background:linear-gradient(#f6f6f4,#e4e5e1);box-sizing:border-box;box-shadow:0 1px 1px #c0c0bc;"></div>
<div class="t" style="left:639px;top:345px;font-size:12.2px;color:#5a5a58;">Constraint (1)</div>
<div class="abs" style="left:807px;top:342px;width:16px;height:20px;background:linear-gradient(#e0262c,#b00c12);border-radius:3px;"></div>
<svg class="abs" style="left:807px;top:342px" width="16" height="20"><path d="M4.500 8.500 H11.500 L8 12.500 Z" fill="#fff"/></svg>
<div class="abs" style="left:826px;top:341px;width:120px;height:21px;border:1px solid #b4b7af;border-radius:4px;background:linear-gradient(#f6f6f4,#e4e5e1);box-sizing:border-box;box-shadow:0 1px 1px #c0c0bc;"></div>
<div class="t" style="left:829px;top:345px;font-size:12.2px;color:#5a5a58;">All Parameters</div>

<!-- param table -->
<div class="abs" style="left:637px;top:364px;width:301px;height:153px;background:#fdfdfd;border-top:2px solid #333;border-left:2px solid #333;box-sizing:border-box;"></div>
<div class="abs" style="left:639px;top:382px;width:299px;height:15px;background:#e6e6e6;"></div>
<div class="abs" style="left:639px;top:381px;width:299px;height:1px;background:#e6ecec;"></div>
<div class="abs" style="left:639px;top:397px;width:299px;height:1px;background:#e6ecec;"></div>
<div class="abs" style="left:639px;top:413px;width:299px;height:1px;background:#e6ecec;"></div>
<div class="abs" style="left:639px;top:428px;width:299px;height:1px;background:#e6ecec;"></div>
<div class="abs" style="left:639px;top:444px;width:299px;height:1px;background:#e6ecec;"></div>
<div class="abs" style="left:639px;top:460px;width:299px;height:1px;background:#e6ecec;"></div>
<div class="abs" style="left:737px;top:366px;width:1px;height:95px;background:#e6ecec;"></div>
<div class="t" style="left:662px;top:367px;font-size:12.2px;color:#333;">Name</div><div class="t" style="left:742px;top:367px;font-size:12.2px;color:#333;">Constr_1</div>
<div class="t" style="left:662px;top:383px;font-size:12.2px;color:#333;">Owner</div><div class="t" style="left:742px;top:383px;font-size:12.2px;color:#333;">opamp090.ampp:constraint</div>
<div class="t" style="left:662px;top:398px;font-size:12.2px;color:#333;">Enabled</div><div class="t" style="left:742px;top:398px;font-size:12.2px;color:#333;">true</div>
<div class="t" style="left:662px;top:414px;font-size:12.2px;color:#333;">Status</div><div class="t" style="left:742px;top:414px;font-size:12.2px;color:#333;">not checked</div>
<div class="t" style="left:662px;top:430px;font-size:12.2px;color:#333;">Notes</div>
<div class="t" style="left:662px;top:446px;font-size:12.2px;color:#5a70a0;font-style:italic;">DC Value</div><div class="t" style="left:742px;top:446px;font-size:12.2px;color:#333;">0</div>


<div class="abs" style="left:937px;top:0;width:1px;height:565px;background:#fbfbfb;"></div>
<!-- annotations -->
<svg class="abs" style="left:0;top:0" width="938" height="701">
<rect x="150.2" y="93.9" width="131" height="56.3" fill="none" stroke="#0a0af6" stroke-width="6.5"/>
<line x1="225.3" y1="170" x2="222.3" y2="566" stroke="#fff" stroke-width="1.8"/>
<polygon points="225.4,151 216.4,179.8 233.8,179.8" fill="#fff"/>
<line x1="719" y1="537.3" x2="678" y2="280" stroke="#000" stroke-width="1.700"/>
<polygon points="675.2,262.5 671.8,292.4 688,289.8" fill="#000"/>
</svg>
<div class="t" id="an1" style="left:225.500px;top:601px;font-size:22.500px;line-height:24.900px;color:#0a0a0a;transform:scaleX(1.105);transform-origin:0 0;">I4 (ampp) tab selected</div>
<div class="t" id="an2" style="left:618.700px;top:555.600px;font-size:22.500px;line-height:24.930px;color:#0a0a0a;white-space:pre;transform:scaleX(1.105);transform-origin:0 0;">Only constraints at current
level or below are shown.
No constraints created at
the higher full_diff_opamp
level are shown.</div>

</div></body></html>
